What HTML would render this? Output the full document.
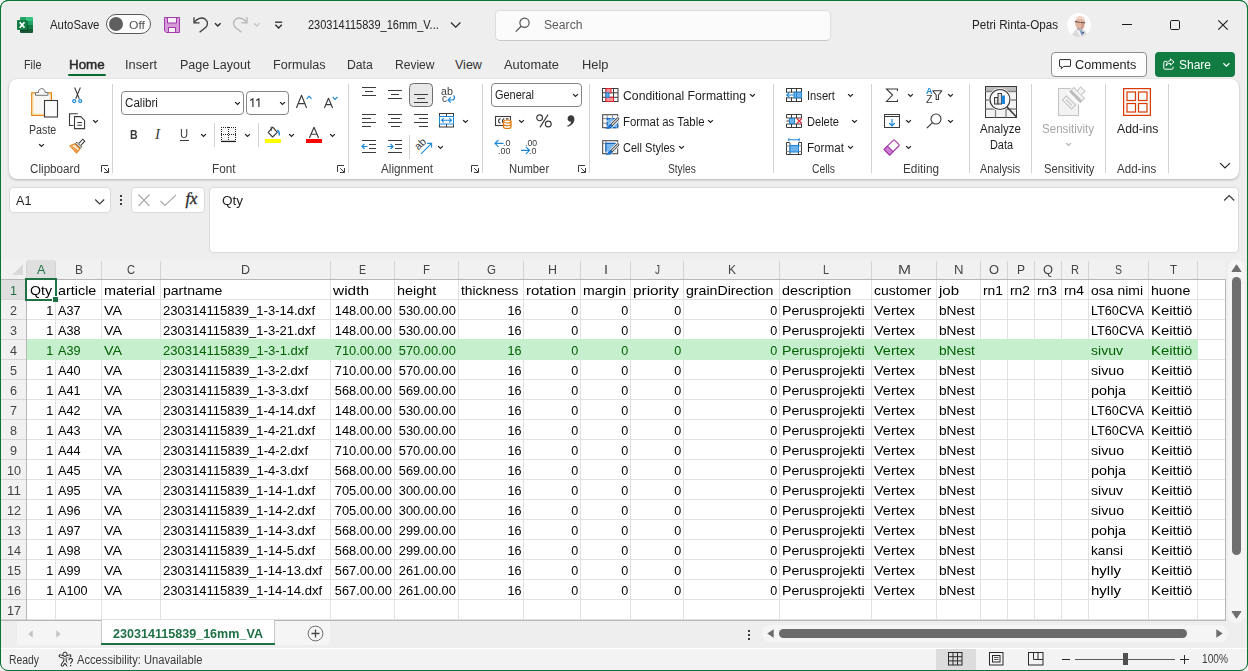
<!DOCTYPE html><html><head><meta charset="utf-8"><title>Excel</title><style>
*{box-sizing:border-box;margin:0;padding:0}
html,body{width:1248px;height:671px;overflow:hidden;background:#f1f1f1}
body{font-family:"Liberation Sans",sans-serif;font-size:12px;color:#242424;position:relative}
#win{position:absolute;left:0;top:0;width:1248px;height:671px;background:#eeeeee;border:1px solid #0b7435;border-radius:8px;overflow:hidden}
.a{position:absolute}
.t{position:absolute;white-space:nowrap;line-height:1;transform-origin:0 0}
svg{position:absolute;overflow:visible}
</style></head><body><div id="win"></div><div id="root" class="a" style="left:0;top:0;width:1248px;height:671px">
<svg style="left:17px;top:17px" width="16" height="16" viewBox="0 0 16 16">
<defs><clipPath id="xb"><rect x="3" y="0" width="13" height="16" rx="1.100"/></clipPath></defs>
<g clip-path="url(#xb)">
<rect x="3" y="0" width="6.600" height="4" fill="#21a366"/><rect x="9.600" y="0" width="6.400" height="4" fill="#33c481"/>
<rect x="3" y="4" width="6.600" height="4" fill="#107c41"/><rect x="9.600" y="4" width="6.400" height="4" fill="#21a366"/>
<rect x="3" y="8" width="6.600" height="4" fill="#185c37"/><rect x="9.600" y="8" width="6.400" height="4" fill="#107c41"/>
<rect x="3" y="12" width="13" height="4" fill="#185c37"/>
<rect x="3" y="4" width="8.300" height="10.200" fill="#000" opacity="0.280"/>
</g>
<rect x="0" y="3" width="10.200" height="10" rx="0.900" fill="#107c41"/>
<path d="M2.700 5.200L7.500 10.800M7.500 5.200L2.700 10.800" stroke="#fff" stroke-width="1.700"/>
</svg>
<div class="t" style="left:49.50px;top:18px;font-size:12.5px;line-height:14px;color:#242424;transform:scaleX(0.9124);">AutoSave</div>
<div class="a" style="left:106px;top:14px;width:45px;height:20px;border:1px solid #5a5a5a;border-radius:10px;background:#fdfdfd"></div>
<div class="a" style="left:109px;top:17px;width:14px;height:14px;border-radius:7px;background:#5f5f5f"></div>
<div class="t" style="left:129.30px;top:19px;font-size:11.5px;line-height:12px;color:#505050;transform:scaleX(1.0540);">Off</div>
<svg style="left:164px;top:17px" width="16" height="16" viewBox="0 0 16 16">
<path d="M0.5 0.5h15v15H2.2L0.5 13.800z" fill="#d59bd9" stroke="#a33bab" stroke-width="1"/>
<rect x="3.5" y="0.5" width="9" height="5.5" fill="#f7f0f8" stroke="#a33bab"/>
<rect x="4.5" y="10.500" width="7" height="5" fill="#f7f0f8" stroke="#a33bab"/>
</svg>
<svg style="left:193px;top:16px" width="16" height="17" viewBox="0 0 16 17">
<path d="M1 1.2V6.800H6.600" fill="none" stroke="#3b3b3b" stroke-width="1.3"/>
<path d="M1.300 6.500C4 2.200 9 0.800 12.300 3.200c3.200 2.500 2.500 6.300 0.300 8.300L6.600 16.300" fill="none" stroke="#3b3b3b" stroke-width="1.3"/>
</svg>
<svg style="left:214px;top:22px" width="8" height="6"><path d="M1 1.200L3.800 4 6.600 1.200" fill="none" stroke="#2b2b2b" stroke-width="1.4"/></svg>
<svg style="left:232px;top:16px" width="16" height="17" viewBox="0 0 16 17">
<path d="M15 1.2V6.800H9.400" fill="none" stroke="#b4b4b4" stroke-width="1.3"/>
<path d="M14.700 6.500C12 2.200 7 0.800 3.700 3.200c-3.200 2.500 -2.500 6.300 -0.300 8.300L9.400 16.300" fill="none" stroke="#b4b4b4" stroke-width="1.3"/>
</svg>
<svg style="left:253px;top:22px" width="8" height="6"><path d="M1 1.200L3.800 4 6.600 1.200" fill="none" stroke="#c4c4c4" stroke-width="1.3"/></svg>
<svg style="left:274px;top:21px" width="10" height="9"><path d="M1 1.200H8.200" stroke="#2b2b2b" stroke-width="1.3"/><path d="M1.400 3.800L4.600 7 7.800 3.800" fill="none" stroke="#2b2b2b" stroke-width="1.4"/></svg>
<div class="t" style="left:307.70px;top:18px;font-size:12.5px;line-height:14px;color:#242424;transform:scaleX(0.8793);">230314115839_16mm_V...</div>
<svg style="left:450px;top:21px" width="12" height="8"><path d="M1 1.500L5.700 6.200 10.400 1.500" fill="none" stroke="#2b2b2b" stroke-width="1.300"/></svg>
<div class="a" style="left:495px;top:10px;width:336px;height:31px;border:1px solid #dcdcdc;border-bottom-color:#c8c8c8;border-radius:5px;background:#fbfbfb"></div>
<svg style="left:515px;top:17px" width="16" height="16" viewBox="0 0 16 16"><circle cx="9.5" cy="5.800" r="4.600" fill="none" stroke="#555" stroke-width="1.200"/><path d="M6.200 9.200L0.800 14.600" stroke="#555" stroke-width="1.300"/></svg>
<div class="t" style="left:544.00px;top:18px;font-size:12.5px;line-height:14px;color:#5c5c5c;transform:scaleX(0.9716);">Search</div>
<div class="t" style="left:972.00px;top:18px;font-size:12.5px;line-height:14px;color:#242424;transform:scaleX(0.9310);">Petri Rinta-Opas</div>
<svg style="left:1067px;top:13px" width="24" height="24" viewBox="0 0 24 24">
<defs><clipPath id="av"><circle cx="12" cy="12" r="12"/></clipPath>
<filter id="bl" x="-20%" y="-20%" width="140%" height="140%"><feGaussianBlur stdDeviation="0.450"/></filter></defs>
<circle cx="12" cy="12" r="12" fill="#fdfdfd"/>
<g clip-path="url(#av)" filter="url(#bl)">
<path d="M3.500 25L6.500 19C8 17.200 9.500 16.500 10.500 16L16 16.500C18.500 17.500 20 19.500 20.500 25z" fill="#dcd9dc"/>
<path d="M9.500 15.500L12 17.500 14.500 23 13.500 24 10.500 19z" fill="#f4f4f6"/>
<path d="M13 18L14.800 16.800 16.200 20.500 14.600 23z" fill="#7f9bcc"/><path d="M9.800 16.200L11 15.600 11.600 16.800z" fill="#4f6fae"/>
<circle cx="16.200" cy="19.800" r="0.800" fill="#1d2a4a"/>
<ellipse cx="13" cy="9.600" rx="4.900" ry="6.500" fill="#e2b5a0"/>
<path d="M8.300 8C8.800 4.500 11 3 13.200 3c2.800 0 4.600 2 4.800 5 -1.600 -1.200 -3.200 -1.700 -4.800 -1.700 -2 0 -3.600 0.700 -4.900 1.700z" fill="#efd3c6"/>
<path d="M14.500 9.500c1.500 0.500 3 2 2.800 4.500 -0.800 1.500 -2 2.300 -3 2.500z" fill="#c98a78" opacity="0.700"/>
<path d="M10.200 14c1.500 1.400 4 1.400 5.600 0 0 2.300 -1.300 3.400 -2.800 3.400 -1.500 0 -2.800 -1.300 -2.800 -3.400z" fill="#b9a9a3"/>
<path d="M7.800 8.500L10 8.900M10 8.900L12.600 9.400M14 9.500L18.200 9.900" stroke="#4a4040" stroke-width="0.900" fill="none"/><path d="M12.600 9.400L14 9.500" stroke="#8a6a60" stroke-width="0.700"/>
</g></svg>
<svg style="left:1122px;top:24px" width="10" height="1"><rect width="10" height="1" fill="#1b1b1b"/></svg>
<svg style="left:1170px;top:20px" width="10" height="10"><rect x="0.5" y="0.5" width="9" height="9" rx="1.2" fill="none" stroke="#1b1b1b" stroke-width="1"/></svg>
<svg style="left:1218px;top:20px" width="10" height="10"><path d="M0.300 0.300L9.700 9.700M9.700 0.300L0.300 9.700" stroke="#1b1b1b" stroke-width="1.100"/></svg>
<div class="t" style="left:23.60px;top:58px;font-size:12.5px;line-height:14px;color:#333;transform:scaleX(0.8646);">File</div>
<div class="t" style="left:125.00px;top:58px;font-size:12.5px;line-height:14px;color:#333;transform:scaleX(1.0240);">Insert</div>
<div class="t" style="left:180.30px;top:58px;font-size:12.5px;line-height:14px;color:#333;transform:scaleX(1.0036);">Page Layout</div>
<div class="t" style="left:273.00px;top:58px;font-size:12.5px;line-height:14px;color:#333;transform:scaleX(1.0091);">Formulas</div>
<div class="t" style="left:347.40px;top:58px;font-size:12.5px;line-height:14px;color:#333;transform:scaleX(0.9774);">Data</div>
<div class="t" style="left:395.00px;top:58px;font-size:12.5px;line-height:14px;color:#333;transform:scaleX(0.9629);">Review</div>
<div class="t" style="left:455.00px;top:58px;font-size:12.5px;line-height:14px;color:#333;transform:scaleX(1.0000);">View</div>
<div class="t" style="left:504.00px;top:58px;font-size:12.5px;line-height:14px;color:#333;transform:scaleX(1.0280);">Automate</div>
<div class="t" style="left:582.00px;top:58px;font-size:12.5px;line-height:14px;color:#333;transform:scaleX(1.0291);">Help</div>
<div class="t" style="left:68.90px;top:58px;font-size:12.5px;line-height:14px;color:#2a2a2a;transform:scaleX(1.0697);-webkit-text-stroke:0.450px #2a2a2a;">Home</div>
<div class="a" style="left:68px;top:74px;width:38px;height:2px;border-radius:1px;background:#0a6b31"></div>
<div class="a" style="left:1051px;top:52px;width:96px;height:25px;border:1px solid #8f8f8f;border-radius:4px;background:#fdfdfd"></div>
<svg style="left:1059px;top:59px" width="12" height="11" viewBox="0 0 12 11"><path d="M1 0.600h10a0.500 0.500 0 0 1 0.500 0.500v5.800a0.500 0.500 0 0 1-0.500 0.500H4.800L2.300 9.800V7.400H1a0.500 0.500 0 0 1-0.500-0.500V1.100a0.500 0.500 0 0 1 0.500-0.500z" fill="none" stroke="#2b2b2b" stroke-width="1"/></svg>
<div class="t" style="left:1075.30px;top:58px;font-size:12.5px;line-height:14px;color:#1f1f1f;transform:scaleX(1.0170);">Comments</div>
<div class="a" style="left:1155px;top:52px;width:80px;height:25px;border-radius:4px;background:#107c41"></div>
<svg style="left:1163px;top:58px" width="12" height="12" viewBox="0 0 12 12"><path d="M4.200 3.400H1.600a0.800 0.800 0 0 0-0.800 0.800v6.200a0.800 0.800 0 0 0 0.800 0.800h7.600a0.800 0.800 0 0 0 0.800-0.800V8.600" fill="none" stroke="#fff" stroke-width="1"/><path d="M7.400 0.800L11 4 7.400 7.200V5.300C5.200 5.300 4 6.200 3.200 8 3.300 5 4.800 3 7.400 2.700z" fill="none" stroke="#fff" stroke-width="1" stroke-linejoin="round"/></svg>
<div class="t" style="left:1179.00px;top:58px;font-size:12.5px;line-height:14px;color:#fff;transform:scaleX(0.9588);">Share</div>
<svg style="left:1222px;top:62px" width="9" height="6"><path d="M1.400 1.200L4.400 4.100 7.400 1.200" fill="none" stroke="#fff" stroke-width="1.200"/></svg>
<div class="a" style="left:9px;top:79px;width:1230px;height:100px;background:#ffffff;border-radius:8px;box-shadow:0 1px 2.500px rgba(0,0,0,0.240),0 0 1px rgba(0,0,0,0.120)"></div>
<svg style="left:30px;top:87px" width="29" height="32">
<rect x="1.800" y="5.900" width="19.600" height="22.400" fill="#f8f7f5" stroke="#e27f10" stroke-width="1.300"/>
<rect x="3" y="7.100" width="17.200" height="20" fill="none" stroke="#fbe2a6" stroke-width="1.100"/>
<path d="M5.500 8.300V5.500H8.300C8.300 2.900 9.800 1.600 11.700 1.600S15.100 2.900 15.100 5.500H17.900V8.300z" fill="#f8f8f8" stroke="#767676" stroke-width="1"/>
<rect x="14.500" y="13.500" width="13" height="16.500" fill="#fbfbfb" stroke="#3b3b3b" stroke-width="1.100"/>
</svg>
<div class="t" style="left:28.70px;top:123px;font-size:12.5px;line-height:14px;color:#3b3b3b;transform:scaleX(0.8531);">Paste</div>
<svg style="left:38px;top:143px" width="7" height="6"><path d="M1.500 1.500L3.50 3.50 5.50 1.500" fill="none" stroke="#262626" stroke-width="1.2" stroke-linecap="square"/></svg>
<svg style="left:71px;top:86px" width="13" height="18">
<path d="M3.600 1.500L8.300 12.800M9.400 1.500L4.700 12.800" stroke="#3b3b3b" stroke-width="1.050" fill="none"/>
<circle cx="3.200" cy="15.100" r="1.500" fill="none" stroke="#1e88e0" stroke-width="1.200"/>
<circle cx="9.200" cy="15.100" r="1.500" fill="none" stroke="#1e88e0" stroke-width="1.200"/>
</svg>
<svg style="left:68px;top:113px" width="18" height="17">
<path d="M5.500 12.500H1.500V0.800H9.800" fill="none" stroke="#3b3b3b" stroke-width="1.100"/>
<path d="M6.500 3.600H12.800L16.600 7.400V15.600H6.500z" fill="#fdfdfd" stroke="#3b3b3b" stroke-width="1.100"/>
<path d="M9.300 9.500H14M9.300 12.200H14" stroke="#3b3b3b" stroke-width="1"/>
</svg>
<svg style="left:92px;top:119px" width="7" height="6"><path d="M1.500 1.500L3.50 3.50 5.50 1.500" fill="none" stroke="#262626" stroke-width="1.2" stroke-linecap="square"/></svg>
<svg style="left:69px;top:138px" width="17" height="16">
<path d="M9.800 5.400L13.800 1.200 15.800 3.200 11.800 7.400" fill="#fdfdfd" stroke="#3b3b3b" stroke-width="1.050"/>
<path d="M7.800 4.200L12.600 9 11.400 10.200 6.600 5.400z" fill="#fdfdfd" stroke="#3b3b3b" stroke-width="1"/>
<path d="M6 5.800L11 10.800 7.500 15 1 7.800z" fill="#fde3c8" stroke="#e27f10" stroke-width="1.100" stroke-linejoin="round"/>
<path d="M3 8.500L8.200 12.200L7.400 14.200" fill="none" stroke="#e27f10" stroke-width="1"/>
<path d="M4.500 10.500L7.200 13.600 8.300 12.300z" fill="#f0923a"/>
</svg>
<div class="t" style="left:29.50px;top:162px;font-size:12.5px;line-height:14px;color:#3b3b3b;transform:scaleX(0.9346);">Clipboard</div>
<svg style="left:101px;top:165px" width="9" height="9"><path d="M0.500 7V0.500H7" fill="none" stroke="#3b3b3b" stroke-width="1"/><path d="M3.200 3.200L7.300 7.300M7.500 3V7.500H3" fill="none" stroke="#3b3b3b" stroke-width="1"/></svg>
<div class="a" style="left:112px;top:84px;width:1px;height:89px;background:#d2d2d2;"></div>
<div class="a" style="left:121px;top:91px;width:123px;height:24px;border:1px solid #868686;border-radius:4px;background:#fff"></div>
<div class="t" style="left:124.60px;top:96px;font-size:12.5px;line-height:14px;color:#1f1f1f;transform:scaleX(0.9300);">Calibri</div>
<svg style="left:234px;top:101px" width="7" height="6"><path d="M1.500 1.500L3.50 3.50 5.50 1.500" fill="none" stroke="#262626" stroke-width="1.2" stroke-linecap="square"/></svg>
<div class="a" style="left:246px;top:91px;width:43px;height:24px;border:1px solid #868686;border-radius:4px;background:#fff"></div>
<svg style="left:250px;top:98px" width="12" height="10"><path d="M0.300 2.400L2.400 1.100M2.900 0.300V9M6.300 2.400L8.400 1.100M8.900 0.300V9" fill="none" stroke="#2a2a2a" stroke-width="1.150"/></svg>
<svg style="left:279px;top:101px" width="7" height="6"><path d="M1.500 1.500L3.50 3.50 5.50 1.500" fill="none" stroke="#262626" stroke-width="1.2" stroke-linecap="square"/></svg>
<svg style="left:296px;top:95px" width="11" height="13"><path d="M0.400 13L5.50 0.300 10.60 13M2.37 8.58H8.63" fill="none" stroke="#3b3b3b" stroke-width="1.15" stroke-linejoin="round"/></svg>
<svg style="left:305.5px;top:95px" width="7" height="5"><path d="M0.700 3.800L3.100 1.200 5.500 3.800" fill="none" stroke="#1e88d8" stroke-width="1.200"/></svg>
<svg style="left:323.5px;top:98px" width="9.0" height="10"><path d="M0.400 10L4.50 0.300 8.60 10M2.03 6.60H6.97" fill="none" stroke="#3b3b3b" stroke-width="1.15" stroke-linejoin="round"/></svg>
<svg style="left:331.5px;top:95.5px" width="7" height="5"><path d="M0.700 0.800L3.100 3.400 5.500 0.800" fill="none" stroke="#1e88d8" stroke-width="1.200"/></svg>
<div class="t" style="left:129.60px;top:127px;font-size:13px;line-height:15px;color:#3b3b3b;transform:scaleX(0.8120);font-weight:bold;">B</div>
<div class="t" style="left:155px;top:126px;font-size:15px;line-height:17px;color:#3b3b3b;font-family:'Liberation Serif',serif;font-style:italic">I</div>
<div class="t" style="left:180.40px;top:127px;font-size:12.5px;line-height:14px;color:#3b3b3b;transform:scaleX(0.9000);">U</div>
<div class="a" style="left:180px;top:140px;width:9px;height:1px;background:#3b3b3b;"></div>
<svg style="left:200px;top:133px" width="7" height="6"><path d="M1.500 1.500L3.50 3.50 5.50 1.500" fill="none" stroke="#262626" stroke-width="1.2" stroke-linecap="square"/></svg>
<div class="a" style="left:214px;top:123px;width:1px;height:24px;background:#d2d2d2;"></div>
<svg style="left:221px;top:127px" width="16" height="16">
<rect x="0.500" y="0.500" width="14" height="13" fill="#f7f7f7"/>
<path d="M0 0.500H15M0 7.500H15" fill="none" stroke="#2b2b2b" stroke-width="1" stroke-dasharray="1 1"/>
<path d="M0.500 0V13M7.500 0V13M14.500 0V13" fill="none" stroke="#2b2b2b" stroke-width="1" stroke-dasharray="1 1"/>
<rect x="0" y="13.800" width="15" height="1.300" fill="#1f1f1f"/>
</svg>
<svg style="left:244px;top:133px" width="7" height="6"><path d="M1.500 1.500L3.50 3.50 5.50 1.500" fill="none" stroke="#262626" stroke-width="1.2" stroke-linecap="square"/></svg>
<div class="a" style="left:258px;top:123px;width:1px;height:24px;background:#d2d2d2;"></div>
<svg style="left:266px;top:126px" width="17" height="13">
<path d="M6.800 1.200L11.300 6.300 6.600 11 2.200 6.300z" fill="#fdfdfd" stroke="#3b3b3b" stroke-width="1.100" stroke-linejoin="round"/>
<path d="M5.200 0.600V5" stroke="#3b3b3b" stroke-width="1"/>
<path d="M11.200 4.300c1.800 0.800 2.400 2.800 2 5.200" fill="none" stroke="#1e88d8" stroke-width="1.500"/>
</svg>
<div class="a" style="left:265px;top:139px;width:16px;height:4px;background:#ffff00;"></div>
<svg style="left:288px;top:133px" width="7" height="6"><path d="M1.500 1.500L3.50 3.50 5.50 1.500" fill="none" stroke="#262626" stroke-width="1.2" stroke-linecap="square"/></svg>
<svg style="left:309.3px;top:127px" width="10.0" height="11"><path d="M0.400 11L5.00 0.300 9.60 11M2.20 7.26H7.80" fill="none" stroke="#3b3b3b" stroke-width="1.15" stroke-linejoin="round"/></svg>
<div class="a" style="left:306px;top:139px;width:16px;height:4px;background:#ff0000;"></div>
<svg style="left:329px;top:133px" width="7" height="6"><path d="M1.500 1.500L3.50 3.50 5.50 1.500" fill="none" stroke="#262626" stroke-width="1.2" stroke-linecap="square"/></svg>
<div class="t" style="left:211.50px;top:162px;font-size:12.5px;line-height:14px;color:#3b3b3b;transform:scaleX(0.9400);">Font</div>
<svg style="left:337px;top:165px" width="9" height="9"><path d="M0.500 7V0.500H7" fill="none" stroke="#3b3b3b" stroke-width="1"/><path d="M3.200 3.200L7.300 7.300M7.500 3V7.500H3" fill="none" stroke="#3b3b3b" stroke-width="1"/></svg>
<div class="a" style="left:348px;top:84px;width:1px;height:89px;background:#d2d2d2;"></div>
<div class="a" style="left:362px;top:87px;width:14px;height:1px;background:#3b3b3b;"></div>
<div class="a" style="left:365px;top:91px;width:8px;height:1px;background:#3b3b3b;"></div>
<div class="a" style="left:362px;top:95px;width:14px;height:1px;background:#3b3b3b;"></div>
<div class="a" style="left:388px;top:90px;width:14px;height:1px;background:#3b3b3b;"></div>
<div class="a" style="left:391px;top:94px;width:8px;height:1px;background:#3b3b3b;"></div>
<div class="a" style="left:388px;top:98px;width:14px;height:1px;background:#3b3b3b;"></div>
<div class="a" style="left:409px;top:83px;width:24px;height:24px;border:1px solid #6e6e6e;border-radius:4.500px;background:#e8e8e8"></div>
<div class="a" style="left:414px;top:94px;width:14px;height:1px;background:#3b3b3b;"></div>
<div class="a" style="left:417px;top:98px;width:8px;height:1px;background:#3b3b3b;"></div>
<div class="a" style="left:414px;top:102px;width:14px;height:1px;background:#3b3b3b;"></div>
<div class="t" style="left:441.40px;top:85px;font-size:10.5px;line-height:12px;color:#3b3b3b;transform:scaleX(1.0124);">ab</div>
<div class="t" style="left:441.60px;top:92px;font-size:10.5px;line-height:12px;color:#3b3b3b;transform:scaleX(0.9524);">c</div>
<svg style="left:447px;top:95px" width="9" height="8"><path d="M6.500 0.500C8.500 2.500 7.500 5 5 5H1.200M3.800 2.200L1 5 3.800 7.600" fill="none" stroke="#1e88d8" stroke-width="1.200"/></svg>
<div class="a" style="left:362px;top:114px;width:14px;height:1px;background:#3b3b3b;"></div>
<div class="a" style="left:362px;top:118px;width:9px;height:1px;background:#3b3b3b;"></div>
<div class="a" style="left:362px;top:122px;width:14px;height:1px;background:#3b3b3b;"></div>
<div class="a" style="left:362px;top:126px;width:9px;height:1px;background:#3b3b3b;"></div>
<div class="a" style="left:388px;top:114px;width:14px;height:1px;background:#3b3b3b;"></div>
<div class="a" style="left:390.5px;top:118px;width:9.0px;height:1px;background:#3b3b3b;"></div>
<div class="a" style="left:388px;top:122px;width:14px;height:1px;background:#3b3b3b;"></div>
<div class="a" style="left:390.5px;top:126px;width:9.0px;height:1px;background:#3b3b3b;"></div>
<div class="a" style="left:414px;top:114px;width:14px;height:1px;background:#3b3b3b;"></div>
<div class="a" style="left:419px;top:118px;width:9px;height:1px;background:#3b3b3b;"></div>
<div class="a" style="left:414px;top:122px;width:14px;height:1px;background:#3b3b3b;"></div>
<div class="a" style="left:419px;top:126px;width:9px;height:1px;background:#3b3b3b;"></div>
<svg style="left:439px;top:113px" width="16" height="15">
<rect x="0.500" y="0.500" width="14" height="13.500" fill="#fdfdfd" stroke="#3b3b3b" stroke-width="1"/>
<path d="M7.500 0.500V3.500M7.500 11V14" stroke="#3b3b3b" stroke-width="1"/>
<rect x="0.500" y="3.500" width="14" height="7.500" fill="#fdfdfd" stroke="#1e88d8" stroke-width="1"/>
<path d="M2.500 7.250H12.500M4.700 5.200L2.500 7.250 4.700 9.300M10.300 5.200L12.500 7.250 10.300 9.300" fill="none" stroke="#1e88d8" stroke-width="1.100"/>
</svg>
<svg style="left:462px;top:119px" width="7" height="6"><path d="M1.500 1.500L3.50 3.50 5.50 1.500" fill="none" stroke="#262626" stroke-width="1.2" stroke-linecap="square"/></svg>
<div class="a" style="left:362px;top:140px;width:14px;height:1px;background:#3b3b3b;"></div>
<div class="a" style="left:369px;top:144px;width:7px;height:1px;background:#3b3b3b;"></div>
<div class="a" style="left:369px;top:148px;width:7px;height:1px;background:#3b3b3b;"></div>
<div class="a" style="left:362px;top:152px;width:14px;height:1px;background:#3b3b3b;"></div>
<svg style="left:361px;top:143px" width="8" height="7"><path d="M1 3.500H6.500M3.500 1L1 3.500 3.500 6" fill="none" stroke="#1e88d8" stroke-width="1.200"/></svg>
<div class="a" style="left:388px;top:140px;width:14px;height:1px;background:#3b3b3b;"></div>
<div class="a" style="left:395px;top:144px;width:7px;height:1px;background:#3b3b3b;"></div>
<div class="a" style="left:395px;top:148px;width:7px;height:1px;background:#3b3b3b;"></div>
<div class="a" style="left:388px;top:152px;width:14px;height:1px;background:#3b3b3b;"></div>
<svg style="left:387px;top:143px" width="8" height="7"><path d="M0.500 3.500H6M3.500 1L6 3.500 3.500 6" fill="none" stroke="#1e88d8" stroke-width="1.200"/></svg>
<div class="a" style="left:409px;top:135px;width:1px;height:24px;background:#d2d2d2;"></div>
<div class="t" style="left:420px;top:139.500px;font-size:10.500px;line-height:12px;color:#3b3b3b;transform:rotate(-45deg);transform-origin:0 100%">ab</div>
<svg style="left:420px;top:142px" width="13" height="13"><path d="M1 11.800L11.300 1.700M7.200 1.400H11.600V5.800" fill="none" stroke="#1e88d8" stroke-width="1.100"/></svg>
<svg style="left:437px;top:145px" width="7" height="6"><path d="M1.500 1.500L3.50 3.50 5.50 1.500" fill="none" stroke="#262626" stroke-width="1.2" stroke-linecap="square"/></svg>
<div class="t" style="left:381.40px;top:162px;font-size:12.5px;line-height:14px;color:#3b3b3b;transform:scaleX(0.9366);">Alignment</div>
<svg style="left:471px;top:165px" width="9" height="9"><path d="M0.500 7V0.500H7" fill="none" stroke="#3b3b3b" stroke-width="1"/><path d="M3.200 3.200L7.300 7.300M7.500 3V7.500H3" fill="none" stroke="#3b3b3b" stroke-width="1"/></svg>
<div class="a" style="left:482px;top:84px;width:1px;height:89px;background:#d2d2d2;"></div>
<div class="a" style="left:491px;top:83px;width:91px;height:24px;border:1px solid #868686;border-radius:4px;background:#fff"></div>
<div class="t" style="left:494.80px;top:88px;font-size:12.5px;line-height:14px;color:#1f1f1f;transform:scaleX(0.8764);">General</div>
<svg style="left:572px;top:93px" width="7" height="6"><path d="M1.500 1.500L3.50 3.50 5.50 1.500" fill="none" stroke="#262626" stroke-width="1.2" stroke-linecap="square"/></svg>
<svg style="left:495px;top:115px" width="17" height="15">
<rect x="0.500" y="1.500" width="15" height="9" fill="#fdfdfd" stroke="#3b3b3b" stroke-width="1.100"/>
<path d="M5.600 4C3.200 3.200 2.600 8.600 5.600 7.800M9.300 4C7.200 3.400 6.800 8.400 9 7.900M11 3.800H13.500" fill="none" stroke="#3b3b3b" stroke-width="1.150"/>
<path d="M8.500 6.500v5.500c0 2 7.500 2 7.500 0V6.500" fill="#fdfdfd" stroke="#e07a10" stroke-width="1.200"/>
<ellipse cx="12.250" cy="6.500" rx="3.750" ry="1.500" fill="#fdfdfd" stroke="#e07a10" stroke-width="1.200"/>
<path d="M8.500 9.300c0 1.900 7.500 1.900 7.500 0" fill="none" stroke="#e07a10" stroke-width="1.200"/>
</svg>
<svg style="left:518px;top:119px" width="7" height="6"><path d="M1.500 1.500L3.50 3.50 5.50 1.500" fill="none" stroke="#262626" stroke-width="1.2" stroke-linecap="square"/></svg>
<svg style="left:536px;top:114px" width="16" height="14"><circle cx="3.600" cy="3.800" r="2.900" fill="none" stroke="#3b3b3b" stroke-width="1.150"/><circle cx="12.300" cy="10" r="2.900" fill="none" stroke="#3b3b3b" stroke-width="1.150"/><path d="M12 0.600L4 13.400" stroke="#3b3b3b" stroke-width="1.150"/></svg>
<svg style="left:566px;top:115px" width="9" height="12"><path d="M4.900 0.300C7 0.300 8.400 1.800 8.400 4.200 8.400 7.600 5.800 10.600 1.600 11.700L1.200 10.800C3.600 9.900 5 8.400 5.200 6.600 3.200 7 1.600 5.600 1.600 3.700 1.600 1.700 3 0.300 4.900 0.300z" fill="#3b3b3b"/></svg>
<div class="t" style="left:502.80px;top:137px;font-size:9.5px;line-height:11px;color:#3b3b3b;transform:scaleX(0.9512);">.0</div>
<div class="t" style="left:498.00px;top:145px;font-size:9.5px;line-height:11px;color:#3b3b3b;transform:scaleX(0.9315);">.00</div>
<svg style="left:494px;top:139px" width="11" height="9"><path d="M1 4.300H9.500M4.500 0.800L1 4.300 4.500 7.800" fill="none" stroke="#1e88d8" stroke-width="1.200"/></svg>
<div class="t" style="left:524.50px;top:137px;font-size:9.5px;line-height:11px;color:#3b3b3b;transform:scaleX(0.9163);">.00</div>
<div class="t" style="left:529.20px;top:145px;font-size:9.5px;line-height:11px;color:#3b3b3b;transform:scaleX(0.9385);">.0</div>
<svg style="left:520px;top:146px" width="11" height="9"><path d="M1 4.300H9.500M6 0.800L9.500 4.300 6 7.800" fill="none" stroke="#1e88d8" stroke-width="1.200"/></svg>
<div class="t" style="left:508.70px;top:162px;font-size:12.5px;line-height:14px;color:#3b3b3b;transform:scaleX(0.9034);">Number</div>
<svg style="left:578px;top:165px" width="9" height="9"><path d="M0.500 7V0.500H7" fill="none" stroke="#3b3b3b" stroke-width="1"/><path d="M3.200 3.200L7.300 7.300M7.500 3V7.500H3" fill="none" stroke="#3b3b3b" stroke-width="1"/></svg>
<div class="a" style="left:589px;top:84px;width:1px;height:89px;background:#d2d2d2;"></div>
<svg style="left:602px;top:88px" width="17" height="15">
<rect x="0.500" y="0.500" width="15.500" height="13" fill="#fdfdfd" stroke="#3b3b3b" stroke-width="1"/>
<path d="M4 0.500V13.500M11.500 0.500V13.500M0.500 4.800H16M0.500 9.300H16" stroke="#3b3b3b" stroke-width="1"/>
<rect x="4" y="0.500" width="5" height="4.300" fill="#f7959c" stroke="#e0202c" stroke-width="1"/>
<rect x="4" y="9.300" width="7.500" height="4.200" fill="#f7959c" stroke="#e0202c" stroke-width="1"/>
<rect x="4" y="4.800" width="3" height="4.500" fill="#6aaae8" stroke="#1e88d8" stroke-width="1"/>
</svg>
<div class="t" style="left:622.70px;top:89px;font-size:12.5px;line-height:14px;color:#1f1f1f;transform:scaleX(0.9781);">Conditional Formatting</div>
<svg style="left:749px;top:93px" width="7" height="6"><path d="M1.500 1.500L3.50 3.50 5.50 1.500" fill="none" stroke="#262626" stroke-width="1.2" stroke-linecap="square"/></svg>
<svg style="left:602px;top:114px" width="17" height="16">
<rect x="0.700" y="0.700" width="15" height="13" fill="#fdfdfd" stroke="#3b3b3b" stroke-width="1"/>
<path d="M5.200 0.700V13.700M10.400 0.700V13.700M0.700 4.600H15.700M0.700 9.200H15.700" stroke="#8a8a8a" stroke-width="1"/>
<rect x="5.200" y="4.600" width="10.500" height="9.100" fill="#7ab8f0" stroke="#1666c0" stroke-width="1.200" stroke-dasharray="3.200 2.200"/>
<path d="M15.800 4.800L8.800 11.800" stroke="#fdfdfd" stroke-width="4.600" stroke-linecap="round"/>
<path d="M15.800 4.800L8.800 11.800" stroke="#3b3b3b" stroke-width="3" stroke-linecap="round"/>
<path d="M15.800 4.800L9.600 11" stroke="#e4e4e4" stroke-width="1.300" stroke-linecap="round" stroke-dasharray="1.200 1"/>
<path d="M8.200 9.800L10.600 12.200C9.500 14.600 6 15.200 3 14.600 5.500 13.800 6.200 11.500 8.200 9.800z" fill="#1e74cc"/>
</svg>
<div class="t" style="left:622.70px;top:115px;font-size:12.5px;line-height:14px;color:#1f1f1f;transform:scaleX(0.9119);">Format as Table</div>
<svg style="left:707px;top:119px" width="7" height="6"><path d="M1.500 1.500L3.50 3.50 5.50 1.500" fill="none" stroke="#262626" stroke-width="1.2" stroke-linecap="square"/></svg>
<svg style="left:602px;top:140px" width="17" height="16">
<rect x="0.700" y="0.700" width="15" height="13" fill="#fdfdfd" stroke="#3b3b3b" stroke-width="1"/>
<path d="M4 0.700V13.700M0.700 3.400H15.700" stroke="#8a8a8a" stroke-width="1"/>
<rect x="3.900" y="3.400" width="9.600" height="8.200" fill="#7ab8f0"/>
<path d="M3.900 11.600V3.400H13.500" fill="none" stroke="#1666c0" stroke-width="1.300"/>
<path d="M15.800 4.800L8.800 11.800" stroke="#fdfdfd" stroke-width="4.600" stroke-linecap="round"/>
<path d="M15.800 4.800L8.800 11.800" stroke="#3b3b3b" stroke-width="3" stroke-linecap="round"/>
<path d="M15.800 4.800L9.600 11" stroke="#e4e4e4" stroke-width="1.300" stroke-linecap="round" stroke-dasharray="1.200 1"/>
<path d="M8.200 9.800L10.600 12.200C9.500 14.600 6 15.200 3 14.600 5.500 13.800 6.200 11.500 8.200 9.800z" fill="#1e74cc"/>
</svg>
<div class="t" style="left:622.70px;top:141px;font-size:12.5px;line-height:14px;color:#1f1f1f;transform:scaleX(0.8814);">Cell Styles</div>
<svg style="left:678px;top:145px" width="7" height="6"><path d="M1.500 1.500L3.50 3.50 5.50 1.500" fill="none" stroke="#262626" stroke-width="1.2" stroke-linecap="square"/></svg>
<div class="t" style="left:667.50px;top:162px;font-size:12.5px;line-height:14px;color:#3b3b3b;transform:scaleX(0.8147);">Styles</div>
<div class="a" style="left:773px;top:84px;width:1px;height:89px;background:#d2d2d2;"></div>
<svg style="left:786px;top:88px" width="17" height="15">
<rect x="0.500" y="0.500" width="15" height="13" fill="#fdfdfd" stroke="#3b3b3b" stroke-width="1"/>
<path d="M5.500 0.500V13.500M10.500 0.500V13.500M0.500 4.200H15.500M0.500 9.800H15.500" stroke="#3b3b3b" stroke-width="1"/>
<rect x="0" y="4.800" width="8" height="4.400" fill="#fdfdfd"/>
<rect x="8" y="4.200" width="7.500" height="5.600" fill="#6fb1ea" stroke="#1e88d8" stroke-width="1"/>
<path d="M10.500 4.200V9.800" stroke="#1e88d8" stroke-width="1"/>
<path d="M0.800 7H8M3.500 4.400L0.800 7 3.500 9.600" fill="none" stroke="#1e88d8" stroke-width="1.200"/>
</svg>
<div class="t" style="left:806.90px;top:89px;font-size:12.5px;line-height:14px;color:#1f1f1f;transform:scaleX(0.8928);">Insert</div>
<svg style="left:847px;top:93px" width="7" height="6"><path d="M1.500 1.500L3.50 3.50 5.50 1.500" fill="none" stroke="#262626" stroke-width="1.2" stroke-linecap="square"/></svg>
<svg style="left:786px;top:114px" width="17" height="15">
<path d="M0.500 0.500H15.500M0.500 4H15.500M0.500 10H15.500M0.500 13.500H15.500M0.500 0.500V4M5.500 0.500V4M10.500 0.500V4M15.500 0.500V4M0.500 10V13.500M5.500 10V13.500M10.500 10V13.500M15.500 10V13.500" fill="none" stroke="#3b3b3b" stroke-width="1"/>
<path d="M0.500 7H3" stroke="#3b3b3b" stroke-width="1"/>
<rect x="3.500" y="4.500" width="5" height="5" fill="#6fb1ea" stroke="#1e88d8" stroke-width="1"/>
<path d="M10.800 4.500L15.800 9.500M15.800 4.500L10.800 9.500" stroke="#e8293b" stroke-width="1.200"/>
</svg>
<div class="t" style="left:806.90px;top:115px;font-size:12.5px;line-height:14px;color:#1f1f1f;transform:scaleX(0.8858);">Delete</div>
<svg style="left:851px;top:119px" width="7" height="6"><path d="M1.500 1.500L3.50 3.50 5.50 1.500" fill="none" stroke="#262626" stroke-width="1.2" stroke-linecap="square"/></svg>
<svg style="left:786px;top:138px" width="17" height="18">
<path d="M2.800 1.800H13.200M2.800 0.300V3.300M13.200 0.300V3.300" stroke="#1e88d8" stroke-width="1.100"/>
<path d="M0.500 4.500V16.500H15.500V4.500M0.500 4.500H3.500M13 4.500H15.500M4 4.500V16.500M12.500 4.500V16.500" fill="none" stroke="#3b3b3b" stroke-width="1"/>
<path d="M0.500 8H15.500M0.500 13.500H15.500" stroke="#8a8a8a" stroke-width="1"/>
<rect x="4" y="7.500" width="8.500" height="6.500" fill="#6fb1ea" stroke="#1e88d8" stroke-width="1.100"/>
</svg>
<div class="t" style="left:806.90px;top:141px;font-size:12.5px;line-height:14px;color:#1f1f1f;transform:scaleX(0.9312);">Format</div>
<svg style="left:847px;top:145px" width="7" height="6"><path d="M1.500 1.500L3.50 3.50 5.50 1.500" fill="none" stroke="#262626" stroke-width="1.2" stroke-linecap="square"/></svg>
<div class="t" style="left:811.50px;top:162px;font-size:12.5px;line-height:14px;color:#3b3b3b;transform:scaleX(0.8252);">Cells</div>
<div class="a" style="left:871px;top:84px;width:1px;height:89px;background:#d2d2d2;"></div>
<svg style="left:885px;top:88px" width="14" height="15"><path d="M12.500 3V1H1.500L7.500 7 1.500 13.500H12.500V11.500" fill="none" stroke="#3b3b3b" stroke-width="1.100"/></svg>
<svg style="left:907px;top:93px" width="7" height="6"><path d="M1.500 1.500L3.50 3.50 5.50 1.500" fill="none" stroke="#262626" stroke-width="1.2" stroke-linecap="square"/></svg>
<div class="t" style="left:926.00px;top:85px;font-size:9.5px;line-height:11px;color:#1e88d8;transform:scaleX(0.9503);font-weight:bold;">A</div>
<div class="t" style="left:926.00px;top:94px;font-size:10px;line-height:11px;color:#3b3b3b;transform:scaleX(1.0656);">Z</div>
<svg style="left:932px;top:90px" width="11" height="11"><path d="M0.800 0.800H9.800L6.500 5V9.500H4.200V5z" fill="#fdfdfd" stroke="#3b3b3b" stroke-width="1.100" stroke-linejoin="round"/></svg>
<svg style="left:947px;top:93px" width="7" height="6"><path d="M1.500 1.500L3.50 3.50 5.50 1.500" fill="none" stroke="#262626" stroke-width="1.2" stroke-linecap="square"/></svg>
<svg style="left:884px;top:114px" width="17" height="15">
<rect x="0.500" y="0.500" width="15" height="13" fill="#fdfdfd" stroke="#3b3b3b" stroke-width="1"/>
<path d="M0.500 2.500H15.500" stroke="#3b3b3b" stroke-width="1"/>
<path d="M8 5V11.800M5.200 9L8 11.800 10.800 9" fill="none" stroke="#1e88d8" stroke-width="1.200"/>
</svg>
<svg style="left:905px;top:119px" width="7" height="6"><path d="M1.500 1.500L3.50 3.50 5.50 1.500" fill="none" stroke="#262626" stroke-width="1.2" stroke-linecap="square"/></svg>
<svg style="left:926px;top:113px" width="17" height="16"><circle cx="10" cy="6" r="5" fill="none" stroke="#3b3b3b" stroke-width="1.100"/><path d="M6.400 9.600L0.800 15.200" stroke="#3b3b3b" stroke-width="1.200"/></svg>
<svg style="left:947px;top:119px" width="7" height="6"><path d="M1.500 1.500L3.50 3.50 5.50 1.500" fill="none" stroke="#262626" stroke-width="1.2" stroke-linecap="square"/></svg>
<svg style="left:883px;top:138px" width="18" height="18">
<g transform="translate(8.800,9.300) rotate(-45)">
<rect x="-7" y="-4" width="14" height="8" rx="0.800" fill="#fbfbfb" stroke="#a33bab" stroke-width="1.100"/>
<path d="M-7 -4H-2.200V4H-7z" fill="#cf7dd4" stroke="#a33bab" stroke-width="1.100" stroke-linejoin="round"/>
</g>
</svg>
<svg style="left:905px;top:145px" width="7" height="6"><path d="M1.500 1.500L3.50 3.50 5.50 1.500" fill="none" stroke="#262626" stroke-width="1.2" stroke-linecap="square"/></svg>
<div class="t" style="left:902.50px;top:162px;font-size:12.5px;line-height:14px;color:#3b3b3b;transform:scaleX(0.9412);">Editing</div>
<div class="a" style="left:969px;top:84px;width:1px;height:89px;background:#d2d2d2;"></div>
<svg style="left:985px;top:86px" width="33" height="33">
<rect x="0.500" y="0.500" width="31" height="31" fill="#f3f3f3" stroke="#3b3b3b" stroke-width="1"/>
<rect x="1" y="1" width="30" height="4" fill="#bdbdbd"/>
<path d="M0.500 5.500H31.500M0.500 14H31.500M0.500 23H31.500M10.500 23V31.500M21 23V31.500" stroke="#858585" stroke-width="1.300"/>
<circle cx="15" cy="13.500" r="11.200" fill="#fbfbfb"/><circle cx="15" cy="13.500" r="10" fill="#fbfbfb" stroke="#3b3b3b" stroke-width="1.200"/>
<path d="M22 21L31.500 31" stroke="#3b3b3b" stroke-width="1.600"/>
<rect x="9.500" y="11.500" width="3.500" height="6.500" fill="#e0e0e0" stroke="#3b3b3b" stroke-width="1"/>
<rect x="13" y="7.500" width="3.500" height="10.500" fill="#e0e0e0" stroke="#3b3b3b" stroke-width="1"/>
<rect x="16.500" y="9.500" width="3.500" height="8.500" fill="#1e88d8"/>
</svg>
<div class="t" style="left:980.30px;top:122px;font-size:12.5px;line-height:14px;color:#1f1f1f;transform:scaleX(0.9191);">Analyze</div>
<div class="t" style="left:989.50px;top:138px;font-size:12.5px;line-height:14px;color:#1f1f1f;transform:scaleX(0.8717);">Data</div>
<div class="t" style="left:980.30px;top:162px;font-size:12.5px;line-height:14px;color:#3b3b3b;transform:scaleX(0.8645);">Analysis</div>
<div class="a" style="left:1031px;top:84px;width:1px;height:89px;background:#d2d2d2;"></div>
<svg style="left:1057px;top:85px" width="30" height="33">
<rect x="1.500" y="3.500" width="20" height="27" fill="#f3f3f3" stroke="#c4c4c4" stroke-width="1.100"/>
<g transform="translate(20,10) rotate(45)">
<rect x="-9" y="-9.500" width="18" height="15" fill="#fdfdfd"/>
<rect x="-7.500" y="-3" width="15" height="6" fill="#f3f3f3" stroke="#c4c4c4" stroke-width="1"/>
<rect x="-7.500" y="0.300" width="15" height="2.700" fill="#bcbcbc"/>
<path d="M-2.500 -3L-3.200 -8.200H3.200L2.500 -3" fill="#f3f3f3" stroke="#c4c4c4" stroke-width="1"/>
</g>
<g transform="translate(12,17.500) rotate(45)">
<rect x="-6.500" y="-2.800" width="13" height="5.600" fill="#f3f3f3" stroke="#c4c4c4" stroke-width="1"/>
<path d="M-4 0H4" stroke="#c4c4c4" stroke-width="1.200"/>
</g>
</svg>
<div class="t" style="left:1042.40px;top:122px;font-size:12.5px;line-height:14px;color:#a6a6a6;transform:scaleX(0.9262);">Sensitivity</div>
<svg style="left:1065px;top:142px" width="7" height="6"><path d="M1.500 1.500L3.50 3.50 5.50 1.500" fill="none" stroke="#b4b4b4" stroke-width="1.2" stroke-linecap="square"/></svg>
<div class="t" style="left:1043.50px;top:162px;font-size:12.5px;line-height:14px;color:#3b3b3b;transform:scaleX(0.8960);">Sensitivity</div>
<div class="a" style="left:1105px;top:84px;width:1px;height:89px;background:#d2d2d2;"></div>
<svg style="left:1123px;top:88px" width="28" height="28">
<rect x="0.600" y="0.600" width="26.800" height="26.800" fill="#fdfdfd" stroke="#d83b01" stroke-width="1.200"/>
<rect x="4" y="4" width="8.500" height="8.500" fill="none" stroke="#d83b01" stroke-width="1.200"/>
<rect x="15.500" y="4" width="8.500" height="8.500" fill="none" stroke="#d83b01" stroke-width="1.200"/>
<rect x="4" y="15.500" width="8.500" height="8.500" fill="none" stroke="#d83b01" stroke-width="1.200"/>
<rect x="15.500" y="15.500" width="8.500" height="8.500" fill="none" stroke="#d83b01" stroke-width="1.200"/>
</svg>
<div class="t" style="left:1116.50px;top:122px;font-size:12.5px;line-height:14px;color:#1f1f1f;transform:scaleX(0.9746);">Add-ins</div>
<div class="t" style="left:1117.40px;top:162px;font-size:12.5px;line-height:14px;color:#3b3b3b;transform:scaleX(0.9251);">Add-ins</div>
<div class="a" style="left:1168px;top:84px;width:1px;height:89px;background:#d2d2d2;"></div>
<svg style="left:1219px;top:162px" width="12" height="8.5"><path d="M1.500 1.500L6.00 6.00 10.50 1.500" fill="none" stroke="#2b2b2b" stroke-width="1.2" stroke-linecap="square"/></svg>
<div class="a" style="left:9px;top:187px;width:102px;height:26px;border:1px solid #dadada;border-radius:4px;background:#fff"></div>
<div class="t" style="left:16.30px;top:194px;font-size:12.5px;line-height:14px;color:#1f1f1f;transform:scaleX(1.0098);">A1</div>
<svg style="left:94px;top:198px" width="12" height="8"><path d="M1.200 1.500L5.700 6 10.200 1.500" fill="none" stroke="#3b3b3b" stroke-width="1.200"/></svg>
<div class="a" style="left:120px;top:195px;width:2px;height:2px;background:#3b3b3b;"></div>
<div class="a" style="left:120px;top:199px;width:2px;height:2px;background:#3b3b3b;"></div>
<div class="a" style="left:120px;top:203px;width:2px;height:2px;background:#3b3b3b;"></div>
<div class="a" style="left:131px;top:187px;width:74px;height:26px;border:1px solid #dadada;border-radius:4px;background:#fff"></div>
<svg style="left:138px;top:194px" width="13" height="13"><path d="M0.500 0.500L11.500 12M11.500 0.500L0.500 12" stroke="#a8a8a8" stroke-width="1.100" fill="none"/></svg>
<svg style="left:160px;top:194px" width="17" height="13"><path d="M0.500 7L5 11.500 16 0.800" stroke="#a8a8a8" stroke-width="1.100" fill="none"/></svg>
<div class="t" style="left:185.500px;top:190px;font-size:16.500px;line-height:18px;color:#2b2b2b;font-family:'Liberation Serif',serif;font-style:italic;-webkit-text-stroke:0.350px #2b2b2b;letter-spacing:0px">fx</div>
<div class="a" style="left:209px;top:187px;width:1030px;height:66px;border:1px solid #dadada;border-radius:4px;background:#fff"></div>
<div class="t" style="left:221.50px;top:193px;font-size:13.4px;line-height:15px;color:#1f1f1f;transform:scaleX(1.0142);">Qty</div>
<svg style="left:1223px;top:194px" width="13" height="8"><path d="M1.200 6.500L6.200 1.500 11.200 6.500" fill="none" stroke="#3b3b3b" stroke-width="1.200"/></svg>
<div class="a" style="left:27px;top:279px;width:1198px;height:341px;background:#fff;"></div>
<div class="a" style="left:1px;top:260px;width:1224px;height:19px;background:#f1f1f1;"></div>
<div class="a" style="left:1px;top:279px;width:26px;height:341px;background:#f1f1f1;"></div>
<div class="a" style="left:27px;top:260px;width:28px;height:19px;background:#dfdfdf;"></div>
<div class="a" style="left:1px;top:279px;width:25px;height:21px;background:#dfdfdf;"></div>
<div class="a" style="left:27px;top:339px;width:1171px;height:21px;background:#c6efce;"></div>
<div class="a" style="left:55px;top:279px;width:1px;height:60px;background:#e1e1e1;"></div>
<div class="a" style="left:55px;top:359px;width:1px;height:261px;background:#e1e1e1;"></div>
<div class="a" style="left:55px;top:261px;width:1px;height:18px;background:#d4d4d4;"></div>
<div class="a" style="left:101px;top:279px;width:1px;height:60px;background:#e1e1e1;"></div>
<div class="a" style="left:101px;top:359px;width:1px;height:261px;background:#e1e1e1;"></div>
<div class="a" style="left:101px;top:261px;width:1px;height:18px;background:#d4d4d4;"></div>
<div class="a" style="left:160px;top:279px;width:1px;height:60px;background:#e1e1e1;"></div>
<div class="a" style="left:160px;top:359px;width:1px;height:261px;background:#e1e1e1;"></div>
<div class="a" style="left:160px;top:261px;width:1px;height:18px;background:#d4d4d4;"></div>
<div class="a" style="left:330px;top:279px;width:1px;height:60px;background:#e1e1e1;"></div>
<div class="a" style="left:330px;top:359px;width:1px;height:261px;background:#e1e1e1;"></div>
<div class="a" style="left:330px;top:261px;width:1px;height:18px;background:#d4d4d4;"></div>
<div class="a" style="left:394px;top:279px;width:1px;height:60px;background:#e1e1e1;"></div>
<div class="a" style="left:394px;top:359px;width:1px;height:261px;background:#e1e1e1;"></div>
<div class="a" style="left:394px;top:261px;width:1px;height:18px;background:#d4d4d4;"></div>
<div class="a" style="left:458px;top:279px;width:1px;height:60px;background:#e1e1e1;"></div>
<div class="a" style="left:458px;top:359px;width:1px;height:261px;background:#e1e1e1;"></div>
<div class="a" style="left:458px;top:261px;width:1px;height:18px;background:#d4d4d4;"></div>
<div class="a" style="left:523px;top:279px;width:1px;height:60px;background:#e1e1e1;"></div>
<div class="a" style="left:523px;top:359px;width:1px;height:261px;background:#e1e1e1;"></div>
<div class="a" style="left:523px;top:261px;width:1px;height:18px;background:#d4d4d4;"></div>
<div class="a" style="left:580px;top:279px;width:1px;height:60px;background:#e1e1e1;"></div>
<div class="a" style="left:580px;top:359px;width:1px;height:261px;background:#e1e1e1;"></div>
<div class="a" style="left:580px;top:261px;width:1px;height:18px;background:#d4d4d4;"></div>
<div class="a" style="left:630px;top:279px;width:1px;height:60px;background:#e1e1e1;"></div>
<div class="a" style="left:630px;top:359px;width:1px;height:261px;background:#e1e1e1;"></div>
<div class="a" style="left:630px;top:261px;width:1px;height:18px;background:#d4d4d4;"></div>
<div class="a" style="left:683px;top:279px;width:1px;height:60px;background:#e1e1e1;"></div>
<div class="a" style="left:683px;top:359px;width:1px;height:261px;background:#e1e1e1;"></div>
<div class="a" style="left:683px;top:261px;width:1px;height:18px;background:#d4d4d4;"></div>
<div class="a" style="left:779px;top:279px;width:1px;height:60px;background:#e1e1e1;"></div>
<div class="a" style="left:779px;top:359px;width:1px;height:261px;background:#e1e1e1;"></div>
<div class="a" style="left:779px;top:261px;width:1px;height:18px;background:#d4d4d4;"></div>
<div class="a" style="left:871px;top:279px;width:1px;height:60px;background:#e1e1e1;"></div>
<div class="a" style="left:871px;top:359px;width:1px;height:261px;background:#e1e1e1;"></div>
<div class="a" style="left:871px;top:261px;width:1px;height:18px;background:#d4d4d4;"></div>
<div class="a" style="left:936px;top:279px;width:1px;height:60px;background:#e1e1e1;"></div>
<div class="a" style="left:936px;top:359px;width:1px;height:261px;background:#e1e1e1;"></div>
<div class="a" style="left:936px;top:261px;width:1px;height:18px;background:#d4d4d4;"></div>
<div class="a" style="left:980px;top:279px;width:1px;height:60px;background:#e1e1e1;"></div>
<div class="a" style="left:980px;top:359px;width:1px;height:261px;background:#e1e1e1;"></div>
<div class="a" style="left:980px;top:261px;width:1px;height:18px;background:#d4d4d4;"></div>
<div class="a" style="left:1007px;top:279px;width:1px;height:60px;background:#e1e1e1;"></div>
<div class="a" style="left:1007px;top:359px;width:1px;height:261px;background:#e1e1e1;"></div>
<div class="a" style="left:1007px;top:261px;width:1px;height:18px;background:#d4d4d4;"></div>
<div class="a" style="left:1034px;top:279px;width:1px;height:60px;background:#e1e1e1;"></div>
<div class="a" style="left:1034px;top:359px;width:1px;height:261px;background:#e1e1e1;"></div>
<div class="a" style="left:1034px;top:261px;width:1px;height:18px;background:#d4d4d4;"></div>
<div class="a" style="left:1061px;top:279px;width:1px;height:60px;background:#e1e1e1;"></div>
<div class="a" style="left:1061px;top:359px;width:1px;height:261px;background:#e1e1e1;"></div>
<div class="a" style="left:1061px;top:261px;width:1px;height:18px;background:#d4d4d4;"></div>
<div class="a" style="left:1088px;top:279px;width:1px;height:60px;background:#e1e1e1;"></div>
<div class="a" style="left:1088px;top:359px;width:1px;height:261px;background:#e1e1e1;"></div>
<div class="a" style="left:1088px;top:261px;width:1px;height:18px;background:#d4d4d4;"></div>
<div class="a" style="left:1148px;top:279px;width:1px;height:60px;background:#e1e1e1;"></div>
<div class="a" style="left:1148px;top:359px;width:1px;height:261px;background:#e1e1e1;"></div>
<div class="a" style="left:1148px;top:261px;width:1px;height:18px;background:#d4d4d4;"></div>
<div class="a" style="left:1197px;top:279px;width:1px;height:60px;background:#e1e1e1;"></div>
<div class="a" style="left:1197px;top:359px;width:1px;height:261px;background:#e1e1e1;"></div>
<div class="a" style="left:1197px;top:261px;width:1px;height:18px;background:#d4d4d4;"></div>
<div class="a" style="left:27px;top:299px;width:1198px;height:1px;background:#e1e1e1;"></div>
<div class="a" style="left:1px;top:299px;width:26px;height:1px;background:#d6d6d6;"></div>
<div class="a" style="left:27px;top:319px;width:1198px;height:1px;background:#e1e1e1;"></div>
<div class="a" style="left:1px;top:319px;width:26px;height:1px;background:#d6d6d6;"></div>
<div class="a" style="left:1197px;top:339px;width:28px;height:1px;background:#e1e1e1;"></div>
<div class="a" style="left:1px;top:339px;width:26px;height:1px;background:#d6d6d6;"></div>
<div class="a" style="left:1197px;top:359px;width:28px;height:1px;background:#e1e1e1;"></div>
<div class="a" style="left:1px;top:359px;width:26px;height:1px;background:#d6d6d6;"></div>
<div class="a" style="left:27px;top:379px;width:1198px;height:1px;background:#e1e1e1;"></div>
<div class="a" style="left:1px;top:379px;width:26px;height:1px;background:#d6d6d6;"></div>
<div class="a" style="left:27px;top:399px;width:1198px;height:1px;background:#e1e1e1;"></div>
<div class="a" style="left:1px;top:399px;width:26px;height:1px;background:#d6d6d6;"></div>
<div class="a" style="left:27px;top:419px;width:1198px;height:1px;background:#e1e1e1;"></div>
<div class="a" style="left:1px;top:419px;width:26px;height:1px;background:#d6d6d6;"></div>
<div class="a" style="left:27px;top:439px;width:1198px;height:1px;background:#e1e1e1;"></div>
<div class="a" style="left:1px;top:439px;width:26px;height:1px;background:#d6d6d6;"></div>
<div class="a" style="left:27px;top:459px;width:1198px;height:1px;background:#e1e1e1;"></div>
<div class="a" style="left:1px;top:459px;width:26px;height:1px;background:#d6d6d6;"></div>
<div class="a" style="left:27px;top:479px;width:1198px;height:1px;background:#e1e1e1;"></div>
<div class="a" style="left:1px;top:479px;width:26px;height:1px;background:#d6d6d6;"></div>
<div class="a" style="left:27px;top:499px;width:1198px;height:1px;background:#e1e1e1;"></div>
<div class="a" style="left:1px;top:499px;width:26px;height:1px;background:#d6d6d6;"></div>
<div class="a" style="left:27px;top:519px;width:1198px;height:1px;background:#e1e1e1;"></div>
<div class="a" style="left:1px;top:519px;width:26px;height:1px;background:#d6d6d6;"></div>
<div class="a" style="left:27px;top:539px;width:1198px;height:1px;background:#e1e1e1;"></div>
<div class="a" style="left:1px;top:539px;width:26px;height:1px;background:#d6d6d6;"></div>
<div class="a" style="left:27px;top:559px;width:1198px;height:1px;background:#e1e1e1;"></div>
<div class="a" style="left:1px;top:559px;width:26px;height:1px;background:#d6d6d6;"></div>
<div class="a" style="left:27px;top:579px;width:1198px;height:1px;background:#e1e1e1;"></div>
<div class="a" style="left:1px;top:579px;width:26px;height:1px;background:#d6d6d6;"></div>
<div class="a" style="left:27px;top:599px;width:1198px;height:1px;background:#e1e1e1;"></div>
<div class="a" style="left:1px;top:599px;width:26px;height:1px;background:#d6d6d6;"></div>
<div class="a" style="left:27px;top:619px;width:1198px;height:1px;background:#e1e1e1;"></div>
<div class="a" style="left:1px;top:619px;width:26px;height:1px;background:#d6d6d6;"></div>
<div class="a" style="left:1px;top:279px;width:1224px;height:1px;background:#b7b7b7;"></div>
<div class="a" style="left:26px;top:279px;width:1px;height:341px;background:#b7b7b7;"></div>
<div class="a" style="left:26px;top:261px;width:1px;height:18px;background:#d4d4d4;"></div>
<div class="a" style="left:27px;top:278px;width:29px;height:2px;background:#1e7145;"></div>
<div class="a" style="left:25px;top:279px;width:2px;height:21px;background:#1e7145;"></div>
<svg class="a" style="left:11px;top:264px" width="13" height="12"><path d="M12 0V11H1Z" fill="#d9d9d9"/></svg>
<div class="t" style="left:37.2px;top:262px;font-size:13px;line-height:15px;color:#1e7145;transform:scaleX(0.9802)">A</div>
<div class="t" style="left:74.5px;top:262px;font-size:13px;line-height:15px;color:#444444;transform:scaleX(0.9226)">B</div>
<div class="t" style="left:127.0px;top:262px;font-size:13px;line-height:15px;color:#444444;transform:scaleX(0.8521)">C</div>
<div class="t" style="left:241.0px;top:262px;font-size:13px;line-height:15px;color:#444444;transform:scaleX(0.9586)">D</div>
<div class="t" style="left:359.0px;top:262px;font-size:13px;line-height:15px;color:#444444;transform:scaleX(0.8073)">E</div>
<div class="t" style="left:423.0px;top:262px;font-size:13px;line-height:15px;color:#444444;transform:scaleX(0.8816)">F</div>
<div class="t" style="left:486.5px;top:262px;font-size:13px;line-height:15px;color:#444444;transform:scaleX(0.8901)">G</div>
<div class="t" style="left:547.5px;top:262px;font-size:13px;line-height:15px;color:#444444;transform:scaleX(0.9586)">H</div>
<div class="t" style="left:603.5px;top:262px;font-size:13px;line-height:15px;color:#444444;transform:scaleX(1.1076)">I</div>
<div class="t" style="left:654.5px;top:262px;font-size:13px;line-height:15px;color:#444444;transform:scaleX(0.7692)">J</div>
<div class="t" style="left:727.5px;top:262px;font-size:13px;line-height:15px;color:#444444;transform:scaleX(0.9226)">K</div>
<div class="t" style="left:822.5px;top:262px;font-size:13px;line-height:15px;color:#444444;transform:scaleX(0.8300)">L</div>
<div class="t" style="left:897.5px;top:262px;font-size:13px;line-height:15px;color:#444444;transform:scaleX(1.2005)">M</div>
<div class="t" style="left:953.8px;top:262px;font-size:13px;line-height:15px;color:#444444;transform:scaleX(1.0119)">N</div>
<div class="t" style="left:989.0px;top:262px;font-size:13px;line-height:15px;color:#444444;transform:scaleX(0.9890)">O</div>
<div class="t" style="left:1017.0px;top:262px;font-size:13px;line-height:15px;color:#444444;transform:scaleX(0.9226)">P</div>
<div class="t" style="left:1043.0px;top:262px;font-size:13px;line-height:15px;color:#444444;transform:scaleX(0.9890)">Q</div>
<div class="t" style="left:1071.0px;top:262px;font-size:13px;line-height:15px;color:#444444;transform:scaleX(0.8521)">R</div>
<div class="t" style="left:1115.0px;top:262px;font-size:13px;line-height:15px;color:#444444;transform:scaleX(0.8073)">S</div>
<div class="t" style="left:1169.5px;top:262px;font-size:13px;line-height:15px;color:#444444;transform:scaleX(0.8816)">T</div>
<div class="t" style="left:10.0px;top:283px;font-size:13px;line-height:15px;color:#1e7145;transform:scaleX(0.9683)">1</div>
<div class="t" style="left:10.0px;top:303px;font-size:13px;line-height:15px;color:#444444;transform:scaleX(0.9683)">2</div>
<div class="t" style="left:10.0px;top:323px;font-size:13px;line-height:15px;color:#444444;transform:scaleX(0.9683)">3</div>
<div class="t" style="left:10.0px;top:343px;font-size:13px;line-height:15px;color:#444444;transform:scaleX(0.9683)">4</div>
<div class="t" style="left:10.0px;top:363px;font-size:13px;line-height:15px;color:#444444;transform:scaleX(0.9683)">5</div>
<div class="t" style="left:10.0px;top:383px;font-size:13px;line-height:15px;color:#444444;transform:scaleX(0.9683)">6</div>
<div class="t" style="left:10.0px;top:403px;font-size:13px;line-height:15px;color:#444444;transform:scaleX(0.9683)">7</div>
<div class="t" style="left:10.0px;top:423px;font-size:13px;line-height:15px;color:#444444;transform:scaleX(0.9683)">8</div>
<div class="t" style="left:10.0px;top:443px;font-size:13px;line-height:15px;color:#444444;transform:scaleX(0.9683)">9</div>
<div class="t" style="left:6.5px;top:463px;font-size:13px;line-height:15px;color:#444444;transform:scaleX(0.9683)">10</div>
<div class="t" style="left:6.5px;top:483px;font-size:13px;line-height:15px;color:#444444;transform:scaleX(1.0375)">11</div>
<div class="t" style="left:6.5px;top:503px;font-size:13px;line-height:15px;color:#444444;transform:scaleX(0.9683)">12</div>
<div class="t" style="left:6.5px;top:523px;font-size:13px;line-height:15px;color:#444444;transform:scaleX(0.9683)">13</div>
<div class="t" style="left:6.5px;top:543px;font-size:13px;line-height:15px;color:#444444;transform:scaleX(0.9683)">14</div>
<div class="t" style="left:6.5px;top:563px;font-size:13px;line-height:15px;color:#444444;transform:scaleX(0.9683)">15</div>
<div class="t" style="left:6.5px;top:583px;font-size:13px;line-height:15px;color:#444444;transform:scaleX(0.9683)">16</div>
<div class="t" style="left:6.5px;top:603px;font-size:13px;line-height:15px;color:#444444;transform:scaleX(0.9683)">17</div>
<div class="t" style="left:30px;top:283px;font-size:13px;line-height:15px;color:#000;transform:scaleX(1.0879)">Qty</div>
<div class="t" style="left:58px;top:283px;font-size:13px;line-height:15px;color:#000;transform:scaleX(1.1045)">article</div>
<div class="t" style="left:104px;top:283px;font-size:13px;line-height:15px;color:#000;transform:scaleX(1.1096)">material</div>
<div class="t" style="left:163px;top:283px;font-size:13px;line-height:15px;color:#000;transform:scaleX(1.0799)">partname</div>
<div class="t" style="left:333px;top:283px;font-size:13px;line-height:15px;color:#000;transform:scaleX(1.1863)">width</div>
<div class="t" style="left:397px;top:283px;font-size:13px;line-height:15px;color:#000;transform:scaleX(1.1096)">height</div>
<div class="t" style="left:461px;top:283px;font-size:13px;line-height:15px;color:#000;transform:scaleX(1.0574)">thickness</div>
<div class="t" style="left:526px;top:283px;font-size:13px;line-height:15px;color:#000;transform:scaleX(1.1532)">rotation</div>
<div class="t" style="left:583px;top:283px;font-size:13px;line-height:15px;color:#000;transform:scaleX(1.0822)">margin</div>
<div class="t" style="left:633px;top:283px;font-size:13px;line-height:15px;color:#000;transform:scaleX(1.1794)">priority</div>
<div class="t" style="left:686px;top:283px;font-size:13px;line-height:15px;color:#000;transform:scaleX(1.0886)">grainDirection</div>
<div class="t" style="left:782px;top:283px;font-size:13px;line-height:15px;color:#000;transform:scaleX(1.1024)">description</div>
<div class="t" style="left:874px;top:283px;font-size:13px;line-height:15px;color:#000;transform:scaleX(1.0719)">customer</div>
<div class="t" style="left:939px;top:283px;font-size:13px;line-height:15px;color:#000;transform:scaleX(1.1529)">job</div>
<div class="t" style="left:983px;top:283px;font-size:13px;line-height:15px;color:#000;transform:scaleX(1.0646)">rn1</div>
<div class="t" style="left:1010px;top:283px;font-size:13px;line-height:15px;color:#000;transform:scaleX(1.0646)">rn2</div>
<div class="t" style="left:1037px;top:283px;font-size:13px;line-height:15px;color:#000;transform:scaleX(1.0646)">rn3</div>
<div class="t" style="left:1064px;top:283px;font-size:13px;line-height:15px;color:#000;transform:scaleX(1.0646)">rn4</div>
<div class="t" style="left:1091px;top:283px;font-size:13px;line-height:15px;color:#000;transform:scaleX(1.0743)">osa nimi</div>
<div class="t" style="left:1151px;top:283px;font-size:13px;line-height:15px;color:#000;transform:scaleX(1.0873)">huone</div>
<div class="t" style="right:1195px;top:303px;font-size:13px;line-height:15px;color:#000;transform:scaleX(0.9683);transform-origin:100% 0">1</div>
<div class="t" style="left:58px;top:303px;font-size:13px;line-height:15px;color:#000;transform:scaleX(0.9728)">A37</div>
<div class="t" style="left:104px;top:303px;font-size:13px;line-height:15px;color:#000;transform:scaleX(1.0990)">VA</div>
<div class="t" style="left:163px;top:303px;font-size:13px;line-height:15px;color:#000;transform:scaleX(1.0030)">230314115839_1-3-14.dxf</div>
<div class="t" style="right:856px;top:303px;font-size:13px;line-height:15px;color:#000;transform:scaleX(0.9857);transform-origin:100% 0">148.00.00</div>
<div class="t" style="right:792px;top:303px;font-size:13px;line-height:15px;color:#000;transform:scaleX(0.9857);transform-origin:100% 0">530.00.00</div>
<div class="t" style="right:727px;top:303px;font-size:13px;line-height:15px;color:#000;transform:scaleX(0.9683);transform-origin:100% 0">16</div>
<div class="t" style="right:670px;top:303px;font-size:13px;line-height:15px;color:#000;transform:scaleX(0.9683);transform-origin:100% 0">0</div>
<div class="t" style="right:620px;top:303px;font-size:13px;line-height:15px;color:#000;transform:scaleX(0.9683);transform-origin:100% 0">0</div>
<div class="t" style="right:567px;top:303px;font-size:13px;line-height:15px;color:#000;transform:scaleX(0.9683);transform-origin:100% 0">0</div>
<div class="t" style="right:471px;top:303px;font-size:13px;line-height:15px;color:#000;transform:scaleX(0.9683);transform-origin:100% 0">0</div>
<div class="t" style="left:782px;top:303px;font-size:13px;line-height:15px;color:#000;transform:scaleX(1.0888)">Perusprojekti</div>
<div class="t" style="left:874px;top:303px;font-size:13px;line-height:15px;color:#000;transform:scaleX(1.1152)">Vertex</div>
<div class="t" style="left:939px;top:303px;font-size:13px;line-height:15px;color:#000;transform:scaleX(1.0542)">bNest</div>
<div class="t" style="left:1091px;top:303px;font-size:13px;line-height:15px;color:#000;transform:scaleX(0.9737)">LT60CVA</div>
<div class="t" style="left:1151px;top:303px;font-size:13px;line-height:15px;color:#000;transform:scaleX(1.1431)">Keittiö</div>
<div class="t" style="right:1195px;top:323px;font-size:13px;line-height:15px;color:#000;transform:scaleX(0.9683);transform-origin:100% 0">1</div>
<div class="t" style="left:58px;top:323px;font-size:13px;line-height:15px;color:#000;transform:scaleX(0.9728)">A38</div>
<div class="t" style="left:104px;top:323px;font-size:13px;line-height:15px;color:#000;transform:scaleX(1.0990)">VA</div>
<div class="t" style="left:163px;top:323px;font-size:13px;line-height:15px;color:#000;transform:scaleX(1.0030)">230314115839_1-3-21.dxf</div>
<div class="t" style="right:856px;top:323px;font-size:13px;line-height:15px;color:#000;transform:scaleX(0.9857);transform-origin:100% 0">148.00.00</div>
<div class="t" style="right:792px;top:323px;font-size:13px;line-height:15px;color:#000;transform:scaleX(0.9857);transform-origin:100% 0">530.00.00</div>
<div class="t" style="right:727px;top:323px;font-size:13px;line-height:15px;color:#000;transform:scaleX(0.9683);transform-origin:100% 0">16</div>
<div class="t" style="right:670px;top:323px;font-size:13px;line-height:15px;color:#000;transform:scaleX(0.9683);transform-origin:100% 0">0</div>
<div class="t" style="right:620px;top:323px;font-size:13px;line-height:15px;color:#000;transform:scaleX(0.9683);transform-origin:100% 0">0</div>
<div class="t" style="right:567px;top:323px;font-size:13px;line-height:15px;color:#000;transform:scaleX(0.9683);transform-origin:100% 0">0</div>
<div class="t" style="right:471px;top:323px;font-size:13px;line-height:15px;color:#000;transform:scaleX(0.9683);transform-origin:100% 0">0</div>
<div class="t" style="left:782px;top:323px;font-size:13px;line-height:15px;color:#000;transform:scaleX(1.0888)">Perusprojekti</div>
<div class="t" style="left:874px;top:323px;font-size:13px;line-height:15px;color:#000;transform:scaleX(1.1152)">Vertex</div>
<div class="t" style="left:939px;top:323px;font-size:13px;line-height:15px;color:#000;transform:scaleX(1.0542)">bNest</div>
<div class="t" style="left:1091px;top:323px;font-size:13px;line-height:15px;color:#000;transform:scaleX(0.9737)">LT60CVA</div>
<div class="t" style="left:1151px;top:323px;font-size:13px;line-height:15px;color:#000;transform:scaleX(1.1431)">Keittiö</div>
<div class="t" style="right:1195px;top:343px;font-size:13px;line-height:15px;color:#006100;transform:scaleX(0.9683);transform-origin:100% 0">1</div>
<div class="t" style="left:58px;top:343px;font-size:13px;line-height:15px;color:#006100;transform:scaleX(0.9728)">A39</div>
<div class="t" style="left:104px;top:343px;font-size:13px;line-height:15px;color:#006100;transform:scaleX(1.0990)">VA</div>
<div class="t" style="left:163px;top:343px;font-size:13px;line-height:15px;color:#006100;transform:scaleX(1.0048)">230314115839_1-3-1.dxf</div>
<div class="t" style="right:856px;top:343px;font-size:13px;line-height:15px;color:#006100;transform:scaleX(0.9857);transform-origin:100% 0">710.00.00</div>
<div class="t" style="right:792px;top:343px;font-size:13px;line-height:15px;color:#006100;transform:scaleX(0.9857);transform-origin:100% 0">570.00.00</div>
<div class="t" style="right:727px;top:343px;font-size:13px;line-height:15px;color:#006100;transform:scaleX(0.9683);transform-origin:100% 0">16</div>
<div class="t" style="right:670px;top:343px;font-size:13px;line-height:15px;color:#006100;transform:scaleX(0.9683);transform-origin:100% 0">0</div>
<div class="t" style="right:620px;top:343px;font-size:13px;line-height:15px;color:#006100;transform:scaleX(0.9683);transform-origin:100% 0">0</div>
<div class="t" style="right:567px;top:343px;font-size:13px;line-height:15px;color:#006100;transform:scaleX(0.9683);transform-origin:100% 0">0</div>
<div class="t" style="right:471px;top:343px;font-size:13px;line-height:15px;color:#006100;transform:scaleX(0.9683);transform-origin:100% 0">0</div>
<div class="t" style="left:782px;top:343px;font-size:13px;line-height:15px;color:#006100;transform:scaleX(1.0888)">Perusprojekti</div>
<div class="t" style="left:874px;top:343px;font-size:13px;line-height:15px;color:#006100;transform:scaleX(1.1152)">Vertex</div>
<div class="t" style="left:939px;top:343px;font-size:13px;line-height:15px;color:#006100;transform:scaleX(1.0542)">bNest</div>
<div class="t" style="left:1091px;top:343px;font-size:13px;line-height:15px;color:#006100;transform:scaleX(1.0804)">sivuv</div>
<div class="t" style="left:1151px;top:343px;font-size:13px;line-height:15px;color:#006100;transform:scaleX(1.1431)">Keittiö</div>
<div class="t" style="right:1195px;top:363px;font-size:13px;line-height:15px;color:#000;transform:scaleX(0.9683);transform-origin:100% 0">1</div>
<div class="t" style="left:58px;top:363px;font-size:13px;line-height:15px;color:#000;transform:scaleX(0.9728)">A40</div>
<div class="t" style="left:104px;top:363px;font-size:13px;line-height:15px;color:#000;transform:scaleX(1.0990)">VA</div>
<div class="t" style="left:163px;top:363px;font-size:13px;line-height:15px;color:#000;transform:scaleX(1.0048)">230314115839_1-3-2.dxf</div>
<div class="t" style="right:856px;top:363px;font-size:13px;line-height:15px;color:#000;transform:scaleX(0.9857);transform-origin:100% 0">710.00.00</div>
<div class="t" style="right:792px;top:363px;font-size:13px;line-height:15px;color:#000;transform:scaleX(0.9857);transform-origin:100% 0">570.00.00</div>
<div class="t" style="right:727px;top:363px;font-size:13px;line-height:15px;color:#000;transform:scaleX(0.9683);transform-origin:100% 0">16</div>
<div class="t" style="right:670px;top:363px;font-size:13px;line-height:15px;color:#000;transform:scaleX(0.9683);transform-origin:100% 0">0</div>
<div class="t" style="right:620px;top:363px;font-size:13px;line-height:15px;color:#000;transform:scaleX(0.9683);transform-origin:100% 0">0</div>
<div class="t" style="right:567px;top:363px;font-size:13px;line-height:15px;color:#000;transform:scaleX(0.9683);transform-origin:100% 0">0</div>
<div class="t" style="right:471px;top:363px;font-size:13px;line-height:15px;color:#000;transform:scaleX(0.9683);transform-origin:100% 0">0</div>
<div class="t" style="left:782px;top:363px;font-size:13px;line-height:15px;color:#000;transform:scaleX(1.0888)">Perusprojekti</div>
<div class="t" style="left:874px;top:363px;font-size:13px;line-height:15px;color:#000;transform:scaleX(1.1152)">Vertex</div>
<div class="t" style="left:939px;top:363px;font-size:13px;line-height:15px;color:#000;transform:scaleX(1.0542)">bNest</div>
<div class="t" style="left:1091px;top:363px;font-size:13px;line-height:15px;color:#000;transform:scaleX(1.0874)">sivuo</div>
<div class="t" style="left:1151px;top:363px;font-size:13px;line-height:15px;color:#000;transform:scaleX(1.1431)">Keittiö</div>
<div class="t" style="right:1195px;top:383px;font-size:13px;line-height:15px;color:#000;transform:scaleX(0.9683);transform-origin:100% 0">1</div>
<div class="t" style="left:58px;top:383px;font-size:13px;line-height:15px;color:#000;transform:scaleX(0.9728)">A41</div>
<div class="t" style="left:104px;top:383px;font-size:13px;line-height:15px;color:#000;transform:scaleX(1.0990)">VA</div>
<div class="t" style="left:163px;top:383px;font-size:13px;line-height:15px;color:#000;transform:scaleX(1.0048)">230314115839_1-3-3.dxf</div>
<div class="t" style="right:856px;top:383px;font-size:13px;line-height:15px;color:#000;transform:scaleX(0.9857);transform-origin:100% 0">568.00.00</div>
<div class="t" style="right:792px;top:383px;font-size:13px;line-height:15px;color:#000;transform:scaleX(0.9857);transform-origin:100% 0">569.00.00</div>
<div class="t" style="right:727px;top:383px;font-size:13px;line-height:15px;color:#000;transform:scaleX(0.9683);transform-origin:100% 0">16</div>
<div class="t" style="right:670px;top:383px;font-size:13px;line-height:15px;color:#000;transform:scaleX(0.9683);transform-origin:100% 0">0</div>
<div class="t" style="right:620px;top:383px;font-size:13px;line-height:15px;color:#000;transform:scaleX(0.9683);transform-origin:100% 0">0</div>
<div class="t" style="right:567px;top:383px;font-size:13px;line-height:15px;color:#000;transform:scaleX(0.9683);transform-origin:100% 0">0</div>
<div class="t" style="right:471px;top:383px;font-size:13px;line-height:15px;color:#000;transform:scaleX(0.9683);transform-origin:100% 0">0</div>
<div class="t" style="left:782px;top:383px;font-size:13px;line-height:15px;color:#000;transform:scaleX(1.0888)">Perusprojekti</div>
<div class="t" style="left:874px;top:383px;font-size:13px;line-height:15px;color:#000;transform:scaleX(1.1152)">Vertex</div>
<div class="t" style="left:939px;top:383px;font-size:13px;line-height:15px;color:#000;transform:scaleX(1.0542)">bNest</div>
<div class="t" style="left:1091px;top:383px;font-size:13px;line-height:15px;color:#000;transform:scaleX(1.1004)">pohja</div>
<div class="t" style="left:1151px;top:383px;font-size:13px;line-height:15px;color:#000;transform:scaleX(1.1431)">Keittiö</div>
<div class="t" style="right:1195px;top:403px;font-size:13px;line-height:15px;color:#000;transform:scaleX(0.9683);transform-origin:100% 0">1</div>
<div class="t" style="left:58px;top:403px;font-size:13px;line-height:15px;color:#000;transform:scaleX(0.9728)">A42</div>
<div class="t" style="left:104px;top:403px;font-size:13px;line-height:15px;color:#000;transform:scaleX(1.0990)">VA</div>
<div class="t" style="left:163px;top:403px;font-size:13px;line-height:15px;color:#000;transform:scaleX(1.0030)">230314115839_1-4-14.dxf</div>
<div class="t" style="right:856px;top:403px;font-size:13px;line-height:15px;color:#000;transform:scaleX(0.9857);transform-origin:100% 0">148.00.00</div>
<div class="t" style="right:792px;top:403px;font-size:13px;line-height:15px;color:#000;transform:scaleX(0.9857);transform-origin:100% 0">530.00.00</div>
<div class="t" style="right:727px;top:403px;font-size:13px;line-height:15px;color:#000;transform:scaleX(0.9683);transform-origin:100% 0">16</div>
<div class="t" style="right:670px;top:403px;font-size:13px;line-height:15px;color:#000;transform:scaleX(0.9683);transform-origin:100% 0">0</div>
<div class="t" style="right:620px;top:403px;font-size:13px;line-height:15px;color:#000;transform:scaleX(0.9683);transform-origin:100% 0">0</div>
<div class="t" style="right:567px;top:403px;font-size:13px;line-height:15px;color:#000;transform:scaleX(0.9683);transform-origin:100% 0">0</div>
<div class="t" style="right:471px;top:403px;font-size:13px;line-height:15px;color:#000;transform:scaleX(0.9683);transform-origin:100% 0">0</div>
<div class="t" style="left:782px;top:403px;font-size:13px;line-height:15px;color:#000;transform:scaleX(1.0888)">Perusprojekti</div>
<div class="t" style="left:874px;top:403px;font-size:13px;line-height:15px;color:#000;transform:scaleX(1.1152)">Vertex</div>
<div class="t" style="left:939px;top:403px;font-size:13px;line-height:15px;color:#000;transform:scaleX(1.0542)">bNest</div>
<div class="t" style="left:1091px;top:403px;font-size:13px;line-height:15px;color:#000;transform:scaleX(0.9737)">LT60CVA</div>
<div class="t" style="left:1151px;top:403px;font-size:13px;line-height:15px;color:#000;transform:scaleX(1.1431)">Keittiö</div>
<div class="t" style="right:1195px;top:423px;font-size:13px;line-height:15px;color:#000;transform:scaleX(0.9683);transform-origin:100% 0">1</div>
<div class="t" style="left:58px;top:423px;font-size:13px;line-height:15px;color:#000;transform:scaleX(0.9728)">A43</div>
<div class="t" style="left:104px;top:423px;font-size:13px;line-height:15px;color:#000;transform:scaleX(1.0990)">VA</div>
<div class="t" style="left:163px;top:423px;font-size:13px;line-height:15px;color:#000;transform:scaleX(1.0030)">230314115839_1-4-21.dxf</div>
<div class="t" style="right:856px;top:423px;font-size:13px;line-height:15px;color:#000;transform:scaleX(0.9857);transform-origin:100% 0">148.00.00</div>
<div class="t" style="right:792px;top:423px;font-size:13px;line-height:15px;color:#000;transform:scaleX(0.9857);transform-origin:100% 0">530.00.00</div>
<div class="t" style="right:727px;top:423px;font-size:13px;line-height:15px;color:#000;transform:scaleX(0.9683);transform-origin:100% 0">16</div>
<div class="t" style="right:670px;top:423px;font-size:13px;line-height:15px;color:#000;transform:scaleX(0.9683);transform-origin:100% 0">0</div>
<div class="t" style="right:620px;top:423px;font-size:13px;line-height:15px;color:#000;transform:scaleX(0.9683);transform-origin:100% 0">0</div>
<div class="t" style="right:567px;top:423px;font-size:13px;line-height:15px;color:#000;transform:scaleX(0.9683);transform-origin:100% 0">0</div>
<div class="t" style="right:471px;top:423px;font-size:13px;line-height:15px;color:#000;transform:scaleX(0.9683);transform-origin:100% 0">0</div>
<div class="t" style="left:782px;top:423px;font-size:13px;line-height:15px;color:#000;transform:scaleX(1.0888)">Perusprojekti</div>
<div class="t" style="left:874px;top:423px;font-size:13px;line-height:15px;color:#000;transform:scaleX(1.1152)">Vertex</div>
<div class="t" style="left:939px;top:423px;font-size:13px;line-height:15px;color:#000;transform:scaleX(1.0542)">bNest</div>
<div class="t" style="left:1091px;top:423px;font-size:13px;line-height:15px;color:#000;transform:scaleX(0.9737)">LT60CVA</div>
<div class="t" style="left:1151px;top:423px;font-size:13px;line-height:15px;color:#000;transform:scaleX(1.1431)">Keittiö</div>
<div class="t" style="right:1195px;top:443px;font-size:13px;line-height:15px;color:#000;transform:scaleX(0.9683);transform-origin:100% 0">1</div>
<div class="t" style="left:58px;top:443px;font-size:13px;line-height:15px;color:#000;transform:scaleX(0.9728)">A44</div>
<div class="t" style="left:104px;top:443px;font-size:13px;line-height:15px;color:#000;transform:scaleX(1.0990)">VA</div>
<div class="t" style="left:163px;top:443px;font-size:13px;line-height:15px;color:#000;transform:scaleX(1.0048)">230314115839_1-4-2.dxf</div>
<div class="t" style="right:856px;top:443px;font-size:13px;line-height:15px;color:#000;transform:scaleX(0.9857);transform-origin:100% 0">710.00.00</div>
<div class="t" style="right:792px;top:443px;font-size:13px;line-height:15px;color:#000;transform:scaleX(0.9857);transform-origin:100% 0">570.00.00</div>
<div class="t" style="right:727px;top:443px;font-size:13px;line-height:15px;color:#000;transform:scaleX(0.9683);transform-origin:100% 0">16</div>
<div class="t" style="right:670px;top:443px;font-size:13px;line-height:15px;color:#000;transform:scaleX(0.9683);transform-origin:100% 0">0</div>
<div class="t" style="right:620px;top:443px;font-size:13px;line-height:15px;color:#000;transform:scaleX(0.9683);transform-origin:100% 0">0</div>
<div class="t" style="right:567px;top:443px;font-size:13px;line-height:15px;color:#000;transform:scaleX(0.9683);transform-origin:100% 0">0</div>
<div class="t" style="right:471px;top:443px;font-size:13px;line-height:15px;color:#000;transform:scaleX(0.9683);transform-origin:100% 0">0</div>
<div class="t" style="left:782px;top:443px;font-size:13px;line-height:15px;color:#000;transform:scaleX(1.0888)">Perusprojekti</div>
<div class="t" style="left:874px;top:443px;font-size:13px;line-height:15px;color:#000;transform:scaleX(1.1152)">Vertex</div>
<div class="t" style="left:939px;top:443px;font-size:13px;line-height:15px;color:#000;transform:scaleX(1.0542)">bNest</div>
<div class="t" style="left:1091px;top:443px;font-size:13px;line-height:15px;color:#000;transform:scaleX(1.0874)">sivuo</div>
<div class="t" style="left:1151px;top:443px;font-size:13px;line-height:15px;color:#000;transform:scaleX(1.1431)">Keittiö</div>
<div class="t" style="right:1195px;top:463px;font-size:13px;line-height:15px;color:#000;transform:scaleX(0.9683);transform-origin:100% 0">1</div>
<div class="t" style="left:58px;top:463px;font-size:13px;line-height:15px;color:#000;transform:scaleX(0.9728)">A45</div>
<div class="t" style="left:104px;top:463px;font-size:13px;line-height:15px;color:#000;transform:scaleX(1.0990)">VA</div>
<div class="t" style="left:163px;top:463px;font-size:13px;line-height:15px;color:#000;transform:scaleX(1.0048)">230314115839_1-4-3.dxf</div>
<div class="t" style="right:856px;top:463px;font-size:13px;line-height:15px;color:#000;transform:scaleX(0.9857);transform-origin:100% 0">568.00.00</div>
<div class="t" style="right:792px;top:463px;font-size:13px;line-height:15px;color:#000;transform:scaleX(0.9857);transform-origin:100% 0">569.00.00</div>
<div class="t" style="right:727px;top:463px;font-size:13px;line-height:15px;color:#000;transform:scaleX(0.9683);transform-origin:100% 0">16</div>
<div class="t" style="right:670px;top:463px;font-size:13px;line-height:15px;color:#000;transform:scaleX(0.9683);transform-origin:100% 0">0</div>
<div class="t" style="right:620px;top:463px;font-size:13px;line-height:15px;color:#000;transform:scaleX(0.9683);transform-origin:100% 0">0</div>
<div class="t" style="right:567px;top:463px;font-size:13px;line-height:15px;color:#000;transform:scaleX(0.9683);transform-origin:100% 0">0</div>
<div class="t" style="right:471px;top:463px;font-size:13px;line-height:15px;color:#000;transform:scaleX(0.9683);transform-origin:100% 0">0</div>
<div class="t" style="left:782px;top:463px;font-size:13px;line-height:15px;color:#000;transform:scaleX(1.0888)">Perusprojekti</div>
<div class="t" style="left:874px;top:463px;font-size:13px;line-height:15px;color:#000;transform:scaleX(1.1152)">Vertex</div>
<div class="t" style="left:939px;top:463px;font-size:13px;line-height:15px;color:#000;transform:scaleX(1.0542)">bNest</div>
<div class="t" style="left:1091px;top:463px;font-size:13px;line-height:15px;color:#000;transform:scaleX(1.1004)">pohja</div>
<div class="t" style="left:1151px;top:463px;font-size:13px;line-height:15px;color:#000;transform:scaleX(1.1431)">Keittiö</div>
<div class="t" style="right:1195px;top:483px;font-size:13px;line-height:15px;color:#000;transform:scaleX(0.9683);transform-origin:100% 0">1</div>
<div class="t" style="left:58px;top:483px;font-size:13px;line-height:15px;color:#000;transform:scaleX(0.9728)">A95</div>
<div class="t" style="left:104px;top:483px;font-size:13px;line-height:15px;color:#000;transform:scaleX(1.0990)">VA</div>
<div class="t" style="left:163px;top:483px;font-size:13px;line-height:15px;color:#000;transform:scaleX(1.0030)">230314115839_1-14-1.dxf</div>
<div class="t" style="right:856px;top:483px;font-size:13px;line-height:15px;color:#000;transform:scaleX(0.9857);transform-origin:100% 0">705.00.00</div>
<div class="t" style="right:792px;top:483px;font-size:13px;line-height:15px;color:#000;transform:scaleX(0.9857);transform-origin:100% 0">300.00.00</div>
<div class="t" style="right:727px;top:483px;font-size:13px;line-height:15px;color:#000;transform:scaleX(0.9683);transform-origin:100% 0">16</div>
<div class="t" style="right:670px;top:483px;font-size:13px;line-height:15px;color:#000;transform:scaleX(0.9683);transform-origin:100% 0">0</div>
<div class="t" style="right:620px;top:483px;font-size:13px;line-height:15px;color:#000;transform:scaleX(0.9683);transform-origin:100% 0">0</div>
<div class="t" style="right:567px;top:483px;font-size:13px;line-height:15px;color:#000;transform:scaleX(0.9683);transform-origin:100% 0">0</div>
<div class="t" style="right:471px;top:483px;font-size:13px;line-height:15px;color:#000;transform:scaleX(0.9683);transform-origin:100% 0">0</div>
<div class="t" style="left:782px;top:483px;font-size:13px;line-height:15px;color:#000;transform:scaleX(1.0888)">Perusprojekti</div>
<div class="t" style="left:874px;top:483px;font-size:13px;line-height:15px;color:#000;transform:scaleX(1.1152)">Vertex</div>
<div class="t" style="left:939px;top:483px;font-size:13px;line-height:15px;color:#000;transform:scaleX(1.0542)">bNest</div>
<div class="t" style="left:1091px;top:483px;font-size:13px;line-height:15px;color:#000;transform:scaleX(1.0804)">sivuv</div>
<div class="t" style="left:1151px;top:483px;font-size:13px;line-height:15px;color:#000;transform:scaleX(1.1431)">Keittiö</div>
<div class="t" style="right:1195px;top:503px;font-size:13px;line-height:15px;color:#000;transform:scaleX(0.9683);transform-origin:100% 0">1</div>
<div class="t" style="left:58px;top:503px;font-size:13px;line-height:15px;color:#000;transform:scaleX(0.9728)">A96</div>
<div class="t" style="left:104px;top:503px;font-size:13px;line-height:15px;color:#000;transform:scaleX(1.0990)">VA</div>
<div class="t" style="left:163px;top:503px;font-size:13px;line-height:15px;color:#000;transform:scaleX(1.0030)">230314115839_1-14-2.dxf</div>
<div class="t" style="right:856px;top:503px;font-size:13px;line-height:15px;color:#000;transform:scaleX(0.9857);transform-origin:100% 0">705.00.00</div>
<div class="t" style="right:792px;top:503px;font-size:13px;line-height:15px;color:#000;transform:scaleX(0.9857);transform-origin:100% 0">300.00.00</div>
<div class="t" style="right:727px;top:503px;font-size:13px;line-height:15px;color:#000;transform:scaleX(0.9683);transform-origin:100% 0">16</div>
<div class="t" style="right:670px;top:503px;font-size:13px;line-height:15px;color:#000;transform:scaleX(0.9683);transform-origin:100% 0">0</div>
<div class="t" style="right:620px;top:503px;font-size:13px;line-height:15px;color:#000;transform:scaleX(0.9683);transform-origin:100% 0">0</div>
<div class="t" style="right:567px;top:503px;font-size:13px;line-height:15px;color:#000;transform:scaleX(0.9683);transform-origin:100% 0">0</div>
<div class="t" style="right:471px;top:503px;font-size:13px;line-height:15px;color:#000;transform:scaleX(0.9683);transform-origin:100% 0">0</div>
<div class="t" style="left:782px;top:503px;font-size:13px;line-height:15px;color:#000;transform:scaleX(1.0888)">Perusprojekti</div>
<div class="t" style="left:874px;top:503px;font-size:13px;line-height:15px;color:#000;transform:scaleX(1.1152)">Vertex</div>
<div class="t" style="left:939px;top:503px;font-size:13px;line-height:15px;color:#000;transform:scaleX(1.0542)">bNest</div>
<div class="t" style="left:1091px;top:503px;font-size:13px;line-height:15px;color:#000;transform:scaleX(1.0874)">sivuo</div>
<div class="t" style="left:1151px;top:503px;font-size:13px;line-height:15px;color:#000;transform:scaleX(1.1431)">Keittiö</div>
<div class="t" style="right:1195px;top:523px;font-size:13px;line-height:15px;color:#000;transform:scaleX(0.9683);transform-origin:100% 0">1</div>
<div class="t" style="left:58px;top:523px;font-size:13px;line-height:15px;color:#000;transform:scaleX(0.9728)">A97</div>
<div class="t" style="left:104px;top:523px;font-size:13px;line-height:15px;color:#000;transform:scaleX(1.0990)">VA</div>
<div class="t" style="left:163px;top:523px;font-size:13px;line-height:15px;color:#000;transform:scaleX(1.0030)">230314115839_1-14-3.dxf</div>
<div class="t" style="right:856px;top:523px;font-size:13px;line-height:15px;color:#000;transform:scaleX(0.9857);transform-origin:100% 0">568.00.00</div>
<div class="t" style="right:792px;top:523px;font-size:13px;line-height:15px;color:#000;transform:scaleX(0.9857);transform-origin:100% 0">299.00.00</div>
<div class="t" style="right:727px;top:523px;font-size:13px;line-height:15px;color:#000;transform:scaleX(0.9683);transform-origin:100% 0">16</div>
<div class="t" style="right:670px;top:523px;font-size:13px;line-height:15px;color:#000;transform:scaleX(0.9683);transform-origin:100% 0">0</div>
<div class="t" style="right:620px;top:523px;font-size:13px;line-height:15px;color:#000;transform:scaleX(0.9683);transform-origin:100% 0">0</div>
<div class="t" style="right:567px;top:523px;font-size:13px;line-height:15px;color:#000;transform:scaleX(0.9683);transform-origin:100% 0">0</div>
<div class="t" style="right:471px;top:523px;font-size:13px;line-height:15px;color:#000;transform:scaleX(0.9683);transform-origin:100% 0">0</div>
<div class="t" style="left:782px;top:523px;font-size:13px;line-height:15px;color:#000;transform:scaleX(1.0888)">Perusprojekti</div>
<div class="t" style="left:874px;top:523px;font-size:13px;line-height:15px;color:#000;transform:scaleX(1.1152)">Vertex</div>
<div class="t" style="left:939px;top:523px;font-size:13px;line-height:15px;color:#000;transform:scaleX(1.0542)">bNest</div>
<div class="t" style="left:1091px;top:523px;font-size:13px;line-height:15px;color:#000;transform:scaleX(1.1004)">pohja</div>
<div class="t" style="left:1151px;top:523px;font-size:13px;line-height:15px;color:#000;transform:scaleX(1.1431)">Keittiö</div>
<div class="t" style="right:1195px;top:543px;font-size:13px;line-height:15px;color:#000;transform:scaleX(0.9683);transform-origin:100% 0">1</div>
<div class="t" style="left:58px;top:543px;font-size:13px;line-height:15px;color:#000;transform:scaleX(0.9728)">A98</div>
<div class="t" style="left:104px;top:543px;font-size:13px;line-height:15px;color:#000;transform:scaleX(1.0990)">VA</div>
<div class="t" style="left:163px;top:543px;font-size:13px;line-height:15px;color:#000;transform:scaleX(1.0030)">230314115839_1-14-5.dxf</div>
<div class="t" style="right:856px;top:543px;font-size:13px;line-height:15px;color:#000;transform:scaleX(0.9857);transform-origin:100% 0">568.00.00</div>
<div class="t" style="right:792px;top:543px;font-size:13px;line-height:15px;color:#000;transform:scaleX(0.9857);transform-origin:100% 0">299.00.00</div>
<div class="t" style="right:727px;top:543px;font-size:13px;line-height:15px;color:#000;transform:scaleX(0.9683);transform-origin:100% 0">16</div>
<div class="t" style="right:670px;top:543px;font-size:13px;line-height:15px;color:#000;transform:scaleX(0.9683);transform-origin:100% 0">0</div>
<div class="t" style="right:620px;top:543px;font-size:13px;line-height:15px;color:#000;transform:scaleX(0.9683);transform-origin:100% 0">0</div>
<div class="t" style="right:567px;top:543px;font-size:13px;line-height:15px;color:#000;transform:scaleX(0.9683);transform-origin:100% 0">0</div>
<div class="t" style="right:471px;top:543px;font-size:13px;line-height:15px;color:#000;transform:scaleX(0.9683);transform-origin:100% 0">0</div>
<div class="t" style="left:782px;top:543px;font-size:13px;line-height:15px;color:#000;transform:scaleX(1.0888)">Perusprojekti</div>
<div class="t" style="left:874px;top:543px;font-size:13px;line-height:15px;color:#000;transform:scaleX(1.1152)">Vertex</div>
<div class="t" style="left:939px;top:543px;font-size:13px;line-height:15px;color:#000;transform:scaleX(1.0542)">bNest</div>
<div class="t" style="left:1091px;top:543px;font-size:13px;line-height:15px;color:#000;transform:scaleX(1.0545)">kansi</div>
<div class="t" style="left:1151px;top:543px;font-size:13px;line-height:15px;color:#000;transform:scaleX(1.1431)">Keittiö</div>
<div class="t" style="right:1195px;top:563px;font-size:13px;line-height:15px;color:#000;transform:scaleX(0.9683);transform-origin:100% 0">1</div>
<div class="t" style="left:58px;top:563px;font-size:13px;line-height:15px;color:#000;transform:scaleX(0.9728)">A99</div>
<div class="t" style="left:104px;top:563px;font-size:13px;line-height:15px;color:#000;transform:scaleX(1.0990)">VA</div>
<div class="t" style="left:163px;top:563px;font-size:13px;line-height:15px;color:#000;transform:scaleX(1.0014)">230314115839_1-14-13.dxf</div>
<div class="t" style="right:856px;top:563px;font-size:13px;line-height:15px;color:#000;transform:scaleX(0.9857);transform-origin:100% 0">567.00.00</div>
<div class="t" style="right:792px;top:563px;font-size:13px;line-height:15px;color:#000;transform:scaleX(0.9857);transform-origin:100% 0">261.00.00</div>
<div class="t" style="right:727px;top:563px;font-size:13px;line-height:15px;color:#000;transform:scaleX(0.9683);transform-origin:100% 0">16</div>
<div class="t" style="right:670px;top:563px;font-size:13px;line-height:15px;color:#000;transform:scaleX(0.9683);transform-origin:100% 0">0</div>
<div class="t" style="right:620px;top:563px;font-size:13px;line-height:15px;color:#000;transform:scaleX(0.9683);transform-origin:100% 0">0</div>
<div class="t" style="right:567px;top:563px;font-size:13px;line-height:15px;color:#000;transform:scaleX(0.9683);transform-origin:100% 0">0</div>
<div class="t" style="right:471px;top:563px;font-size:13px;line-height:15px;color:#000;transform:scaleX(0.9683);transform-origin:100% 0">0</div>
<div class="t" style="left:782px;top:563px;font-size:13px;line-height:15px;color:#000;transform:scaleX(1.0888)">Perusprojekti</div>
<div class="t" style="left:874px;top:563px;font-size:13px;line-height:15px;color:#000;transform:scaleX(1.1152)">Vertex</div>
<div class="t" style="left:939px;top:563px;font-size:13px;line-height:15px;color:#000;transform:scaleX(1.0542)">bNest</div>
<div class="t" style="left:1091px;top:563px;font-size:13px;line-height:15px;color:#000;transform:scaleX(1.1536)">hylly</div>
<div class="t" style="left:1151px;top:563px;font-size:13px;line-height:15px;color:#000;transform:scaleX(1.1431)">Keittiö</div>
<div class="t" style="right:1195px;top:583px;font-size:13px;line-height:15px;color:#000;transform:scaleX(0.9683);transform-origin:100% 0">1</div>
<div class="t" style="left:58px;top:583px;font-size:13px;line-height:15px;color:#000;transform:scaleX(0.9717)">A100</div>
<div class="t" style="left:104px;top:583px;font-size:13px;line-height:15px;color:#000;transform:scaleX(1.0990)">VA</div>
<div class="t" style="left:163px;top:583px;font-size:13px;line-height:15px;color:#000;transform:scaleX(1.0014)">230314115839_1-14-14.dxf</div>
<div class="t" style="right:856px;top:583px;font-size:13px;line-height:15px;color:#000;transform:scaleX(0.9857);transform-origin:100% 0">567.00.00</div>
<div class="t" style="right:792px;top:583px;font-size:13px;line-height:15px;color:#000;transform:scaleX(0.9857);transform-origin:100% 0">261.00.00</div>
<div class="t" style="right:727px;top:583px;font-size:13px;line-height:15px;color:#000;transform:scaleX(0.9683);transform-origin:100% 0">16</div>
<div class="t" style="right:670px;top:583px;font-size:13px;line-height:15px;color:#000;transform:scaleX(0.9683);transform-origin:100% 0">0</div>
<div class="t" style="right:620px;top:583px;font-size:13px;line-height:15px;color:#000;transform:scaleX(0.9683);transform-origin:100% 0">0</div>
<div class="t" style="right:567px;top:583px;font-size:13px;line-height:15px;color:#000;transform:scaleX(0.9683);transform-origin:100% 0">0</div>
<div class="t" style="right:471px;top:583px;font-size:13px;line-height:15px;color:#000;transform:scaleX(0.9683);transform-origin:100% 0">0</div>
<div class="t" style="left:782px;top:583px;font-size:13px;line-height:15px;color:#000;transform:scaleX(1.0888)">Perusprojekti</div>
<div class="t" style="left:874px;top:583px;font-size:13px;line-height:15px;color:#000;transform:scaleX(1.1152)">Vertex</div>
<div class="t" style="left:939px;top:583px;font-size:13px;line-height:15px;color:#000;transform:scaleX(1.0542)">bNest</div>
<div class="t" style="left:1091px;top:583px;font-size:13px;line-height:15px;color:#000;transform:scaleX(1.1536)">hylly</div>
<div class="t" style="left:1151px;top:583px;font-size:13px;line-height:15px;color:#000;transform:scaleX(1.1431)">Keittiö</div>
<div class="a" style="left:25px;top:278px;width:32px;height:23px;border:2px solid #1e7145"></div>
<div class="a" style="left:52px;top:296px;width:6px;height:6px;background:#fff;"></div>
<div class="a" style="left:53px;top:297px;width:5px;height:5px;background:#1e7145;"></div>
<div class="a" style="left:1225px;top:260px;width:22px;height:360px;background:#eeeeee;"></div>
<div class="a" style="left:1225px;top:279px;width:1px;height:342px;background:#b7b7b7;"></div>
<div class="a" style="left:1228px;top:260px;width:17px;height:363px;background:#f5f5f5;border-radius:8px"></div>
<div class="a" style="left:1232px;top:277px;width:9px;height:278px;background:#6f6f6f;border-radius:4.500px"></div>
<svg class="a" style="left:1231px;top:264px" width="11" height="9"><path d="M5.500 1.200L9.800 7.500H1.200Z" fill="#6f6f6f" stroke="#6f6f6f" stroke-width="1.200" stroke-linejoin="round"/></svg>
<svg class="a" style="left:1231px;top:610px" width="11" height="9"><path d="M5.500 7.800L9.800 1.500H1.200Z" fill="#6f6f6f" stroke="#6f6f6f" stroke-width="1.200" stroke-linejoin="round"/></svg>
<div class="a" style="left:1px;top:620px;width:1225px;height:1px;background:#b7b7b7;"></div>
<div class="a" style="left:17px;top:621px;width:313px;height:24px;background:#f5f5f5;border-radius:0 0 4px 4px"></div>
<svg style="left:28px;top:630px" width="5" height="8"><path d="M4.700 0.300V7.700L0.300 4z" fill="#c3c3c3"/></svg>
<svg style="left:56px;top:630px" width="5" height="8"><path d="M0.300 0.300V7.700L4.700 4z" fill="#c3c3c3"/></svg>
<div class="a" style="left:101px;top:620px;width:174px;height:25px;background:#ffffff;"></div>
<div class="a" style="left:101px;top:620px;width:1px;height:24px;background:#c8c8c8;"></div>
<div class="a" style="left:274px;top:620px;width:1px;height:24px;background:#c8c8c8;"></div>
<div class="a" style="left:101px;top:643px;width:174px;height:2px;background:#1e7145;"></div>
<div class="t" style="left:113.00px;top:627px;font-size:12.5px;line-height:14px;color:#1e7145;transform:scaleX(1.0050);font-weight:bold;">230314115839_16mm_VA</div>
<svg style="left:307px;top:625px" width="17" height="17"><circle cx="8.500" cy="8.500" r="7.400" fill="none" stroke="#6b6b6b" stroke-width="1"/><path d="M4.500 8.500H12.500M8.500 4.500V12.500" stroke="#4a4a4a" stroke-width="1.300"/></svg>
<div class="a" style="left:748px;top:630px;width:2px;height:2px;background:#3b3b3b;"></div>
<div class="a" style="left:748px;top:634px;width:2px;height:2px;background:#3b3b3b;"></div>
<div class="a" style="left:748px;top:638px;width:2px;height:2px;background:#3b3b3b;"></div>
<div class="a" style="left:762px;top:625px;width:466px;height:17px;background:#f5f5f5;border-radius:8px"></div>
<svg style="left:767px;top:629px" width="7" height="9"><path d="M6.700 0.300V8.700L0.300 4.500z" fill="#6a6a6a"/></svg>
<div class="a" style="left:779px;top:629px;width:408px;height:9px;background:#6a6a6a;border-radius:4.500px"></div>
<svg style="left:1216px;top:629px" width="7" height="9"><path d="M0.300 0.300V8.700L6.700 4.500z" fill="#6a6a6a"/></svg>
<div class="a" style="left:1px;top:648px;width:1246px;height:1px;background:#ffffff;"></div>
<div class="a" style="left:1px;top:649px;width:1246px;height:21px;background:#f3f3f3;"></div>
<div class="t" style="left:8.70px;top:653px;font-size:12.5px;line-height:14px;color:#3b3b3b;transform:scaleX(0.8304);">Ready</div>
<svg style="left:58px;top:651px" width="16" height="16">
<g fill="none" stroke-linecap="round" stroke-linejoin="round">
<path d="M2.200 5L7 6.300 11.800 5M7 6.300V10.200L4.300 14M7 10.200L9.700 14" stroke="#2b2b2b" stroke-width="3.300"/>
<path d="M2.200 5L7 6.300 11.800 5M7 6.300V10.200L4.300 14M7 10.200L9.700 14" stroke="#f3f3f3" stroke-width="1.300"/>
</g>
<circle cx="7" cy="3.200" r="2.100" fill="#f3f3f3" stroke="#2b2b2b" stroke-width="1"/>
<rect x="9.300" y="6.300" width="6.500" height="9.500" fill="#f3f3f3"/>
<path d="M10.800 9.300C10.800 6.800 14.500 6.800 14.500 9.200 14.500 10.800 12.600 10.800 12.600 12.700" fill="none" stroke="#2b2b2b" stroke-width="1.100"/>
<rect x="12" y="14" width="1.200" height="1.200" fill="#2b2b2b"/>
</svg>
<div class="t" style="left:76.80px;top:653px;font-size:12.5px;line-height:14px;color:#3b3b3b;transform:scaleX(0.8933);">Accessibility: Unavailable</div>
<div class="a" style="left:936px;top:649px;width:40px;height:21px;background:#dcdcdc;"></div>
<svg style="left:948px;top:652px" width="15" height="14"><rect x="0.500" y="0.500" width="13.500" height="12.500" fill="none" stroke="#2b2b2b" stroke-width="1"/><path d="M5 0.500V13M9.500 0.500V13M0.500 4.700H14M0.500 8.900H14" stroke="#2b2b2b" stroke-width="1"/></svg>
<svg style="left:989px;top:652px" width="15" height="14"><rect x="0.500" y="0.500" width="13.500" height="12.500" fill="none" stroke="#2b2b2b" stroke-width="1"/><rect x="3.500" y="3.500" width="7.500" height="6.500" fill="none" stroke="#2b2b2b" stroke-width="1"/><path d="M5 5.500H9.500M5 7.500H9.500" stroke="#2b2b2b" stroke-width="0.800"/></svg>
<svg style="left:1028px;top:652px" width="16" height="14"><rect x="0.500" y="0.500" width="14.500" height="12.500" fill="none" stroke="#2b2b2b" stroke-width="1"/><path d="M5.500 0.500V7.500H15M10 0.500V7.500" fill="none" stroke="#2b2b2b" stroke-width="1"/></svg>
<div class="a" style="left:1062px;top:659px;width:8px;height:1px;background:#2b2b2b;"></div>
<div class="a" style="left:1075px;top:659px;width:100px;height:1px;background:#5a5a5a;"></div>
<div class="a" style="left:1123px;top:653px;width:5px;height:12px;background:#4f4f4f;"></div>
<div class="a" style="left:1180px;top:659px;width:9px;height:1px;background:#2b2b2b;"></div>
<div class="a" style="left:1184px;top:655px;width:1px;height:9px;background:#2b2b2b;"></div>
<div class="t" style="left:1201.70px;top:652px;font-size:12px;line-height:14px;color:#3b3b3b;transform:scaleX(0.8431);">100%</div>
<div class="a" style="left:0;top:0;width:1248px;height:671px;border:1px solid #0b7435;border-radius:8px;box-shadow:0 0 0 12px #f1f1f1"></div>
</div></body></html>
